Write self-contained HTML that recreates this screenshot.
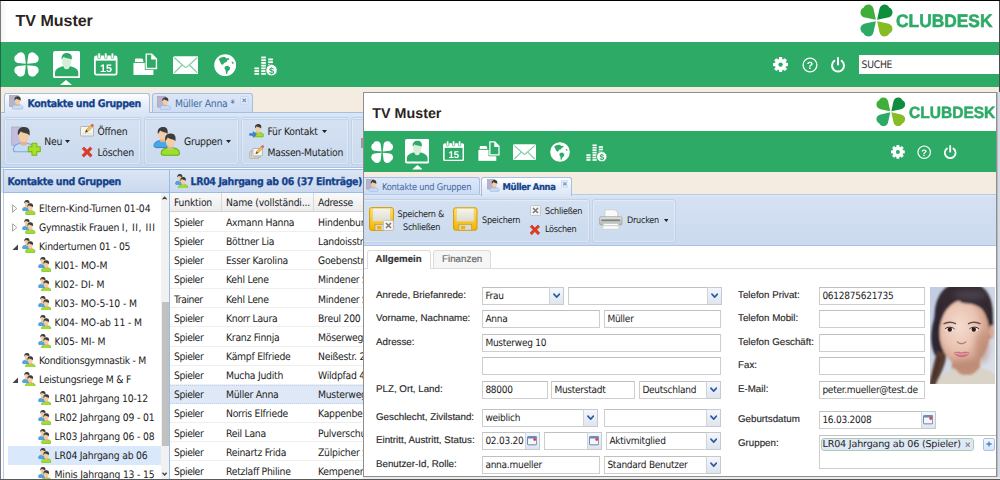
<!DOCTYPE html><html><head><meta charset="utf-8"><title>TV Muster</title><style>
html,body{margin:0;padding:0}
body{text-rendering:geometricPrecision;width:1000px;height:480px;overflow:hidden;position:relative;background:#f4ece1;font-family:"DejaVu Sans Condensed","Liberation Sans",sans-serif;}
div,span,svg{position:absolute;box-sizing:border-box}
span{white-space:nowrap}
.t{font:10.3px/14px "DejaVu Sans Condensed","Liberation Sans",sans-serif;color:#222;letter-spacing:-0.25px}
.tb{font:bold 10.5px/14px "DejaVu Sans Condensed","Liberation Sans",sans-serif;color:#15428b;letter-spacing:-0.38px;-webkit-text-stroke:0.25px #15428b}
.p{font:9px/13px "DejaVu Sans Condensed","Liberation Sans",sans-serif;color:#222;letter-spacing:-0.25px}
.f{font:10px/13px "DejaVu Sans Condensed","Liberation Sans",sans-serif;color:#222;letter-spacing:-0.25px}
.pb{font:bold 9.4px/13px "DejaVu Sans Condensed","Liberation Sans",sans-serif;color:#15428b;letter-spacing:-0.4px;-webkit-text-stroke:0.2px #15428b}
.a{font:9.75px/13px "Liberation Sans",sans-serif;color:#2a2a2a;-webkit-text-stroke:0.15px #2a2a2a}
.h1{font:bold 16px/20px "Liberation Sans",sans-serif;color:#2a2422}
.h2{font:bold 14.3px/18px "Liberation Sans",sans-serif;color:#2a2422}
.grp{border:1px solid #bfd2ea;border-radius:3px;background:linear-gradient(#d4e1f2,#cbdaee);box-shadow:inset 0 0 0 1px rgba(255,255,255,.35)}
.fld{background:#fff;border:1px solid #cecece;border-top-color:#c0c0c0}
.trg{background:linear-gradient(#f4f6fa,#dfe5ee);border:1px solid #c4c9d2;border-left-color:#cfd3da}
</style></head><body>
<div style="left:0px;top:0px;width:1000px;height:42px;background:#fff"></div>
<div style="left:1px;top:1px;width:6px;height:41px;background:linear-gradient(90deg,#f3f3f3,#fff)"></div>
<span class="h1" style="left:15.5px;top:12.0px;">TV Muster</span>
<svg style="position:absolute;left:860px;top:3.5px;" width="33" height="33" viewBox="-13 -13 26 26" ><path d="M-0.5,-0.5 L-9,-2.3 C-11.8,-2.9 -13,-5.2 -12.5,-7.3 C-12.1,-9.1 -11,-9.9 -10.1,-10.1 C-9.9,-11 -9.1,-12.1 -7.3,-12.5 C-5.2,-13 -2.9,-11.8 -2.3,-9 Z" fill="#3fae3a" transform="rotate(0)"/><path d="M-0.5,-0.5 L-9,-2.3 C-11.8,-2.9 -13,-5.2 -12.5,-7.3 C-12.1,-9.1 -11,-9.9 -10.1,-10.1 C-9.9,-11 -9.1,-12.1 -7.3,-12.5 C-5.2,-13 -2.9,-11.8 -2.3,-9 Z" fill="#0f8f3d" transform="rotate(90)"/><path d="M-0.5,-0.5 L-9,-2.3 C-11.8,-2.9 -13,-5.2 -12.5,-7.3 C-12.1,-9.1 -11,-9.9 -10.1,-10.1 C-9.9,-11 -9.1,-12.1 -7.3,-12.5 C-5.2,-13 -2.9,-11.8 -2.3,-9 Z" fill="#86bc25" transform="rotate(180)"/><path d="M-0.5,-0.5 L-9,-2.3 C-11.8,-2.9 -13,-5.2 -12.5,-7.3 C-12.1,-9.1 -11,-9.9 -10.1,-10.1 C-9.9,-11 -9.1,-12.1 -7.3,-12.5 C-5.2,-13 -2.9,-11.8 -2.3,-9 Z" fill="#2eaa67" transform="rotate(270)"/></svg>
<span class="h1" style="left:896px;top:9.6px;color:#2dab66;font-size:18px;line-height:22px;-webkit-text-stroke:0.55px #2dab66;transform:scaleX(0.965);transform-origin:0 0">CLUBDESK</span>
<div style="left:0px;top:42px;width:1000px;height:45px;background:#2dab66"></div>
<svg style="position:absolute;left:14px;top:52px;" width="25" height="25" viewBox="-12.5 -12.5 25 25" ><path d="M-0.7,-0.7 L-8.6,-1.6 C-11.3,-2 -12.5,-4.4 -12.1,-6.6 C-11.8,-8.6 -10.6,-9.4 -9.7,-9.7 C-9.4,-10.6 -8.6,-11.8 -6.6,-12.1 C-4.4,-12.5 -2,-11.3 -1.6,-8.6 Z" fill="#fff" transform="rotate(0)"/><path d="M-0.7,-0.7 L-8.6,-1.6 C-11.3,-2 -12.5,-4.4 -12.1,-6.6 C-11.8,-8.6 -10.6,-9.4 -9.7,-9.7 C-9.4,-10.6 -8.6,-11.8 -6.6,-12.1 C-4.4,-12.5 -2,-11.3 -1.6,-8.6 Z" fill="#fff" transform="rotate(90)"/><path d="M-0.7,-0.7 L-8.6,-1.6 C-11.3,-2 -12.5,-4.4 -12.1,-6.6 C-11.8,-8.6 -10.6,-9.4 -9.7,-9.7 C-9.4,-10.6 -8.6,-11.8 -6.6,-12.1 C-4.4,-12.5 -2,-11.3 -1.6,-8.6 Z" fill="#fff" transform="rotate(180)"/><path d="M-0.7,-0.7 L-8.6,-1.6 C-11.3,-2 -12.5,-4.4 -12.1,-6.6 C-11.8,-8.6 -10.6,-9.4 -9.7,-9.7 C-9.4,-10.6 -8.6,-11.8 -6.6,-12.1 C-4.4,-12.5 -2,-11.3 -1.6,-8.6 Z" fill="#fff" transform="rotate(270)"/></svg>
<svg style="position:absolute;left:52.7px;top:51px;" width="27.3" height="27.3" viewBox="0 0 27 27" ><rect x="0" y="0" width="27" height="27" rx="2.2" fill="#fff"/><path d="M2,25 L2,21.5 C2,17.5 6,16 9.5,15 L17.5,15 C21,16 25,17.5 25,21.5 L25,25 Z" fill="#2dab66"/><ellipse cx="13.5" cy="10.8" rx="4.6" ry="6" fill="#d5edd9"/><path d="M8.6,8.4 C8,3.4 11,2 13.8,2 C17,2 19.4,4 18.5,8.6 C16.5,7 12,7.6 10.5,5.8 C10,7 9.4,7.8 8.6,8.4 Z" fill="#2dab66"/><path d="M10.5,15.2 L16.5,15.2 L15.8,17.2 C14.5,18.2 12.5,18.2 11.2,17.2 Z" fill="#d5edd9"/></svg>
<svg style="position:absolute;left:60px;top:80px;" width="12" height="5" viewBox="0 0 12 5" ><path d="M0,5 L6,0 L12,5 Z" fill="#fff"/></svg>
<svg style="position:absolute;left:94px;top:53px;will-change:transform" width="23.5" height="22.5" viewBox="0 0 24 23" ><rect x="0.9" y="3.4" width="22.2" height="18.8" rx="1.6" fill="none" stroke="#fff" stroke-width="1.8"/><rect x="0.9" y="3.4" width="22.2" height="4.4" fill="#fff"/><rect x="3.9000000000000004" y="0" width="2.6" height="5.6" rx="0.8" fill="#fff" stroke="#2dab66" stroke-width="0.7"/><rect x="10.7" y="0" width="2.6" height="5.6" rx="0.8" fill="#fff" stroke="#2dab66" stroke-width="0.7"/><rect x="17.5" y="0" width="2.6" height="5.6" rx="0.8" fill="#fff" stroke="#2dab66" stroke-width="0.7"/><text x="12.2" y="19.2" font-family="Liberation Sans, sans-serif" font-weight="bold" font-size="11" fill="#fff" text-anchor="middle">15</text></svg>
<svg style="position:absolute;left:133.3px;top:52.8px;" width="24.6" height="22.5" viewBox="0 0 25 23" ><path d="M1.9,6.8 C1.9,6 2.5,5.6 3.2,5.6 L8.6,5.6 C9.4,5.6 10,6.2 10.2,7 L10.6,9.2 L1.9,9.2 Z" fill="#fff"/><path d="M0.4,10.1 L20.8,10.1 L20.8,22.6 L0.4,22.6 Z" fill="#fff"/><path d="M12,-0.4 L19.8,-0.4 L25.4,5.4 L25.4,17.3 L12,17.3 Z" fill="#2dab66"/><path d="M12.8,0.4 L19.4,0.4 L24.6,5.8 L24.6,16.5 L12.8,16.5 Z" fill="#fff"/><path d="M14.2,1.8 L18.5,1.8 L18.5,6.7 L23.2,6.7 L23.2,15.1 L14.2,15.1 Z" fill="#2dab66"/></svg>
<svg style="position:absolute;left:172.7px;top:55.5px;" width="25.6" height="18.2" viewBox="0 0 26 18" ><rect x="0" y="0" width="26" height="18" rx="1.6" fill="#fff"/><path d="M1.8,1.8 L11.8,10.8 C12.6,11.5 13.4,11.5 14.2,10.8 L24.2,1.8" fill="none" stroke="#7fcfa3" stroke-width="1.3" stroke-linecap="round"/><path d="M1.8,16.4 L8.8,9.4 M24.2,16.4 L17.2,9.4" fill="none" stroke="#7fcfa3" stroke-width="1.3" stroke-linecap="round"/></svg>
<svg style="position:absolute;left:213.8px;top:54px;" width="22.4" height="22.4" viewBox="0 0 22 22" ><circle cx="11" cy="11" r="10.8" fill="#fff"/><path d="M4.6,5 C6.4,3.4 8.4,2.6 10.6,3 L12.4,4.4 L14.4,4 L15.2,5.4 L13,6.2 L12.2,8 L10,8.6 L8.8,10.6 L7,10 L6,7.6 Z" fill="#2dab66"/><path d="M11,12 L13.6,11.6 L15.8,13.2 L15.4,15.4 L13.6,17 L12.8,19.6 L11.8,19.4 L11.4,16 L10.2,14 Z" fill="#2dab66"/><path d="M17.4,7.2 L19.2,8.4 L19,10 L17.6,9.2 Z" fill="#2dab66"/></svg>
<svg style="position:absolute;left:253.8px;top:55.2px;will-change:transform" width="23.4" height="20.8" viewBox="0 0 24 21.4" ><rect x="0.4" y="18.4" width="4.8" height="1.9" fill="#fff"/><rect x="0.4" y="15.6" width="4.8" height="1.9" fill="#fff"/><rect x="0.4" y="12.8" width="4.8" height="1.9" fill="#fff"/><rect x="7.4" y="18.4" width="4.8" height="1.9" fill="#fff"/><rect x="7.4" y="15.6" width="4.8" height="1.9" fill="#fff"/><rect x="7.4" y="12.8" width="4.8" height="1.9" fill="#fff"/><rect x="7.4" y="10.0" width="4.8" height="1.9" fill="#fff"/><rect x="7.4" y="7.2" width="4.8" height="1.9" fill="#fff"/><rect x="7.4" y="4.4" width="4.8" height="1.9" fill="#fff"/><rect x="7.4" y="1.6" width="4.8" height="1.9" fill="#fff"/><rect x="14.6" y="12.0" width="4.8" height="1.9" fill="#fff"/><rect x="14.6" y="9.2" width="4.8" height="1.9" fill="#fff"/><rect x="14.6" y="6.4" width="4.8" height="1.9" fill="#fff"/><rect x="14.6" y="3.6" width="4.8" height="1.9" fill="#fff"/><circle cx="18" cy="15.6" r="5.9" fill="#fff" stroke="#2dab66" stroke-width="1"/><text x="18" y="19.2" font-family="Liberation Sans, sans-serif" font-weight="bold" font-size="9.6" fill="#2dab66" text-anchor="middle">$</text></svg>
<svg style="position:absolute;left:773px;top:57px;" width="15.2" height="15.2" viewBox="-7.6 -7.6 15.2 15.2" ><path d="M-1.45,-7.6 L1.45,-7.6 L2.0,-4.4 L-2.0,-4.4 Z" fill="#fff" transform="rotate(0)"/><path d="M-1.45,-7.6 L1.45,-7.6 L2.0,-4.4 L-2.0,-4.4 Z" fill="#fff" transform="rotate(45)"/><path d="M-1.45,-7.6 L1.45,-7.6 L2.0,-4.4 L-2.0,-4.4 Z" fill="#fff" transform="rotate(90)"/><path d="M-1.45,-7.6 L1.45,-7.6 L2.0,-4.4 L-2.0,-4.4 Z" fill="#fff" transform="rotate(135)"/><path d="M-1.45,-7.6 L1.45,-7.6 L2.0,-4.4 L-2.0,-4.4 Z" fill="#fff" transform="rotate(180)"/><path d="M-1.45,-7.6 L1.45,-7.6 L2.0,-4.4 L-2.0,-4.4 Z" fill="#fff" transform="rotate(225)"/><path d="M-1.45,-7.6 L1.45,-7.6 L2.0,-4.4 L-2.0,-4.4 Z" fill="#fff" transform="rotate(270)"/><path d="M-1.45,-7.6 L1.45,-7.6 L2.0,-4.4 L-2.0,-4.4 Z" fill="#fff" transform="rotate(315)"/><circle r="5.5" fill="#fff"/><circle r="2.2" fill="#2dab66"/></svg>
<svg style="position:absolute;left:801.6px;top:56.6px;will-change:transform" width="16" height="16" viewBox="0 0 16 16" ><circle cx="8" cy="8" r="6.9" fill="none" stroke="#fff" stroke-width="1.3"/><text x="8" y="11.8" font-family="Liberation Sans, sans-serif" font-weight="bold" font-size="10.5" fill="#fff" text-anchor="middle">?</text></svg>
<svg style="position:absolute;left:830.2px;top:56.6px;" width="16" height="16" viewBox="0 0 16 16" ><path d="M4.4,3.8 A6,6 0 1 0 11.6,3.8" fill="none" stroke="#fff" stroke-width="2" stroke-linecap="round"/><path d="M8,1.1 L8,7.4" stroke="#fff" stroke-width="2" stroke-linecap="round"/></svg>
<div style="left:858.5px;top:55px;width:141px;height:19px;background:#fff"></div>
<span class="t" style="left:861.5px;top:58.3px;color:#333">SUCHE</span>
<div style="left:152px;top:93px;width:101px;height:19.5px;border:1px solid #a3bfe8;border-bottom:none;border-radius:3px 3px 0 0;background:linear-gradient(#dce7f7,#cddcf3)"></div>
<div style="left:1px;top:112.4px;width:362px;height:4.6px;background:#dbe6f5;border-top:1px solid #a3bfe8"></div>
<div style="left:4px;top:93px;width:145.5px;height:20px;border:1px solid #a3bfe8;border-bottom:none;border-radius:3px 3px 0 0;background:linear-gradient(#ffffff,#e6eefa 55%,#dbe6f5)"></div>
<div style="left:5px;top:112px;width:143.5px;height:2px;background:#dbe6f5"></div>
<svg style="position:absolute;left:8.6px;top:95px;" width="15" height="15" viewBox="0 0 15 15" ><rect x="0.5" y="0.5" width="8.5" height="11" fill="#b7b3c9" stroke="#9e9ab6" stroke-width="0.6"/><g transform="translate(8.6,1.2) scale(0.86)"><path d="M-6.3,13.6 C-6.3,10.8 -3.6,9.8 0,9.8 C3.6,9.8 6.3,10.8 6.3,13.6 C6.3,14.5 5.6,15 4.8,15 L-4.8,15 C-5.6,15 -6.3,14.5 -6.3,13.6 Z" fill="#c6dcf6" stroke="#8fb4e6" stroke-width="0.7"/><path d="M-1.6,8 L1.6,8 L2.2,10.4 C1,11.4 -1,11.4 -2.2,10.4 Z" fill="#e0b48c"/><ellipse cx="0" cy="5.5" rx="3.1" ry="3.8" fill="#f2cda8"/><path d="M-3.5,5 C-4.2,0.8 -1.6,0 0.4,0 C2.9,0 4.2,1.9 3.5,5.2 C2.6,3.6 -0.6,3.9 -1.8,2.6 C-2.2,3.6 -2.8,4.4 -3.5,5 Z" fill="#3c3c3c"/></g></svg>
<span class="tb" style="left:27.5px;top:96.7px;">Kontakte und Gruppen</span>
<svg style="position:absolute;left:157px;top:95.6px;" width="14.5" height="14.5" viewBox="0 0 15 15" ><rect x="0.5" y="0.5" width="8.5" height="11" fill="#b7b3c9" stroke="#9e9ab6" stroke-width="0.6"/><g transform="translate(8.6,1.2) scale(0.86)"><path d="M-6.3,13.6 C-6.3,10.8 -3.6,9.8 0,9.8 C3.6,9.8 6.3,10.8 6.3,13.6 C6.3,14.5 5.6,15 4.8,15 L-4.8,15 C-5.6,15 -6.3,14.5 -6.3,13.6 Z" fill="#c6dcf6" stroke="#8fb4e6" stroke-width="0.7"/><path d="M-1.6,8 L1.6,8 L2.2,10.4 C1,11.4 -1,11.4 -2.2,10.4 Z" fill="#e0b48c"/><ellipse cx="0" cy="5.5" rx="3.1" ry="3.8" fill="#f2cda8"/><path d="M-3.5,5 C-4.2,0.8 -1.6,0 0.4,0 C2.9,0 4.2,1.9 3.5,5.2 C2.6,3.6 -0.6,3.9 -1.8,2.6 C-2.2,3.6 -2.8,4.4 -3.5,5 Z" fill="#3c3c3c"/></g></svg>
<span class="t" style="left:175px;top:96.6px;color:#416aa3">Müller Anna *</span>
<svg style="position:absolute;left:240.2px;top:96.2px;" width="8.6" height="8.6" viewBox="0 0 7 7" ><rect x="0.4" y="0.4" width="6.2" height="6.2" rx="1" fill="#e3ecf9" stroke="#b7cdee" stroke-width="0.5"/><path d="M2.1,2.1 L4.9,4.9 M4.9,2.1 L2.1,4.9" stroke="#6f92c6" stroke-width="1"/></svg>
<div style="left:1px;top:115.5px;width:362px;height:52.5px;background:linear-gradient(#d5e1f3,#cbdaee);border-bottom:1px solid #a9c3e6"></div>
<div class="grp" style="left:3.5px;top:116.5px;width:137px;height:48.5px;"></div>
<div class="grp" style="left:143.5px;top:116.5px;width:95.2px;height:48.5px;"></div>
<div class="grp" style="left:241.4px;top:116.5px;width:108px;height:48.5px;"></div>
<div class="grp" style="left:351.4px;top:116.5px;width:20px;height:48.5px;"></div>
<div style="left:5.5px;top:119px;width:133px;height:1px;background:#c0d3ec"></div>
<div style="left:145.5px;top:119px;width:91.2px;height:1px;background:#c0d3ec"></div>
<div style="left:243.4px;top:119px;width:104px;height:1px;background:#c0d3ec"></div>
<div style="left:353.4px;top:119px;width:16px;height:1px;background:#c0d3ec"></div>
<div style="left:360.8px;top:138px;width:2.2px;height:10px;background:#9a9a98"></div>
<svg style="position:absolute;left:11px;top:126px;" width="30.5" height="30.5" viewBox="0 0 30 30" ><rect x="0.8" y="1" width="10.5" height="18" fill="#c4bedd" stroke="#a59fc8" stroke-width="0.7"/><g transform="translate(12.5,1) scale(1.62)"><path d="M-6.3,13.6 C-6.3,10.8 -3.6,9.8 0,9.8 C3.6,9.8 6.3,10.8 6.3,13.6 C6.3,14.5 5.6,15 4.8,15 L-4.8,15 C-5.6,15 -6.3,14.5 -6.3,13.6 Z" fill="#c6dcf6" stroke="#7fa8e0" stroke-width="0.7"/><path d="M-1.6,8 L1.6,8 L2.2,10.4 C1,11.4 -1,11.4 -2.2,10.4 Z" fill="#e0b48c"/><ellipse cx="0" cy="5.5" rx="3.1" ry="3.8" fill="#f2cda8"/><path d="M-3.5,5 C-4.2,0.8 -1.6,0 0.4,0 C2.9,0 4.2,1.9 3.5,5.2 C2.6,3.6 -0.6,3.9 -1.8,2.6 C-2.2,3.6 -2.8,4.4 -3.5,5 Z" fill="#3c3c3c"/></g><path d="M20.6,17 L25.4,17 L25.4,20.4 L28.8,20.4 L28.8,25.2 L25.4,25.2 L25.4,28.8 L20.6,28.8 L20.6,25.2 L17,25.2 L17,20.4 L20.6,20.4 Z" fill="#a6e02a" stroke="#7cb518" stroke-width="1" stroke-linejoin="round"/></svg>
<span class="t" style="left:44.3px;top:135.4px;">Neu</span>
<svg style="position:absolute;left:65px;top:140px;" width="5" height="3.2" viewBox="0 0 5 3" ><path d='M0,0 L5,0 L2.5,3 Z' fill='#222'/></svg>
<svg style="position:absolute;left:79.6px;top:124px;" width="14" height="12.5" viewBox="0 0 14 12.5" ><rect x="0.5" y="2.5" width="13" height="9.5" rx="0.8" fill="#f4f4f0" stroke="#a8a8a0" stroke-width="0.8"/><path d="M2.5,9.8 L11.5,9.8" stroke="#c8c8c0" stroke-width="0.8" stroke-dasharray="1.5 1"/><path d="M5.2,8.6 L6.2,5.8 L11.2,0.9 L13,2.6 L8,7.6 Z" fill="#f2c24a" stroke="#b88a20" stroke-width="0.5"/><path d="M5.2,8.6 L6.2,5.8 L8,7.6 Z" fill="#444"/><circle cx="12.3" cy="1.4" r="1.3" fill="#e8506a"/></svg>
<span class="t" style="left:97.5px;top:125.0px;">Öffnen</span>
<svg style="position:absolute;left:80.7px;top:145.7px;" width="12.2" height="12.2" viewBox="0 0 11.5 11.5" ><path d="M1.2,2.6 L2.8,1 L5.75,3.9 L8.7,1 L10.3,2.6 L7.5,5.6 L10.5,8.7 L8.8,10.4 L5.75,7.4 L2.7,10.4 L1,8.7 L4,5.6 Z" fill="#e23b24" stroke="#c22a16" stroke-width="0.6" stroke-linejoin="round"/></svg>
<span class="t" style="left:97.5px;top:145.6px;">Löschen</span>
<svg style="position:absolute;left:151.5px;top:127px;" width="29.5" height="28.5" viewBox="0 0 29 28" ><g transform="translate(10.5,0) scale(1.35)"><path d="M-6.3,13.6 C-6.3,10.8 -3.6,9.8 0,9.8 C3.6,9.8 6.3,10.8 6.3,13.6 C6.3,14.5 5.6,15 4.8,15 L-4.8,15 C-5.6,15 -6.3,14.5 -6.3,13.6 Z" fill="#4aa6e8" stroke="#2d7fc0" stroke-width="0.7"/><path d="M-1.6,8 L1.6,8 L2.2,10.4 C1,11.4 -1,11.4 -2.2,10.4 Z" fill="#e0b48c"/><ellipse cx="0" cy="5.5" rx="3.1" ry="3.8" fill="#f2cda8"/><path d="M-3.5,5 C-4.2,0.8 -1.6,0 0.4,0 C2.9,0 4.2,1.9 3.5,5.2 C2.6,3.6 -0.6,3.9 -1.8,2.6 C-2.2,3.6 -2.8,4.4 -3.5,5 Z" fill="#3c3c3c"/></g><g transform="translate(18,6.5) scale(1.42)"><path d="M-6.3,13.6 C-6.3,10.8 -3.6,9.8 0,9.8 C3.6,9.8 6.3,10.8 6.3,13.6 C6.3,14.5 5.6,15 4.8,15 L-4.8,15 C-5.6,15 -6.3,14.5 -6.3,13.6 Z" fill="#9be02a" stroke="#6aa81a" stroke-width="0.7"/><path d="M-1.6,8 L1.6,8 L2.2,10.4 C1,11.4 -1,11.4 -2.2,10.4 Z" fill="#e0b48c"/><ellipse cx="0" cy="5.5" rx="3.1" ry="3.8" fill="#f2cda8"/><path d="M-3.5,5 C-4.2,0.8 -1.6,0 0.4,0 C2.9,0 4.2,1.9 3.5,5.2 C2.6,3.6 -0.6,3.9 -1.8,2.6 C-2.2,3.6 -2.8,4.4 -3.5,5 Z" fill="#3c3c3c"/></g></svg>
<span class="t" style="left:184px;top:135.4px;">Gruppen</span>
<svg style="position:absolute;left:225.6px;top:140px;" width="5" height="3.2" viewBox="0 0 5 3" ><path d='M0,0 L5,0 L2.5,3 Z' fill='#222'/></svg>
<svg style="position:absolute;left:249px;top:124px;" width="15.4" height="14" viewBox="0 0 15 14" ><g transform="translate(9,0) scale(0.86)"><path d="M-6.3,13.6 C-6.3,10.8 -3.6,9.8 0,9.8 C3.6,9.8 6.3,10.8 6.3,13.6 C6.3,14.5 5.6,15 4.8,15 L-4.8,15 C-5.6,15 -6.3,14.5 -6.3,13.6 Z" fill="#9be02a" stroke="#6aa81a" stroke-width="0.7"/><path d="M-1.6,8 L1.6,8 L2.2,10.4 C1,11.4 -1,11.4 -2.2,10.4 Z" fill="#e0b48c"/><ellipse cx="0" cy="5.5" rx="3.1" ry="3.8" fill="#f2cda8"/><path d="M-3.5,5 C-4.2,0.8 -1.6,0 0.4,0 C2.9,0 4.2,1.9 3.5,5.2 C2.6,3.6 -0.6,3.9 -1.8,2.6 C-2.2,3.6 -2.8,4.4 -3.5,5 Z" fill="#3c3c3c"/></g><path d="M0.4,9.4 L4,9.4 L4,7.4 L7.4,10.4 L4,13.4 L4,11.4 L0.4,11.4 Z" fill="#3b82e0" stroke="#2563c0" stroke-width="0.4"/></svg>
<span class="t" style="left:267.6px;top:125.4px;">Für Kontakt</span>
<svg style="position:absolute;left:321.6px;top:130px;" width="5" height="3.2" viewBox="0 0 5 3" ><path d='M0,0 L5,0 L2.5,3 Z' fill='#222'/></svg>
<svg style="position:absolute;left:249px;top:144.6px;" width="15.4" height="14.6" viewBox="0 0 15 14.5" ><rect x="0.6" y="6.6" width="9" height="7" rx="0.8" fill="#e4e4dc" stroke="#a0a098" stroke-width="0.7"/><rect x="2.2" y="5" width="9" height="7" rx="0.8" fill="#ecece6" stroke="#a0a098" stroke-width="0.7"/><rect x="3.8" y="3.4" width="9.4" height="7.4" rx="0.8" fill="#f6f6f2" stroke="#a0a098" stroke-width="0.7"/><path d="M6.6,8.8 L7.4,6.4 L12,1.6 L13.6,3.2 L9,7.9 Z" fill="#f2c24a" stroke="#b88a20" stroke-width="0.5"/><path d="M6.6,8.8 L7.4,6.4 L9,7.9 Z" fill="#444"/><circle cx="13.4" cy="1.6" r="1.3" fill="#e8506a"/></svg>
<span class="t" style="left:267.6px;top:146.2px;">Massen-Mutation</span>
<div style="left:1px;top:168px;width:362px;height:312px;background:#fff"></div>
<div style="left:1px;top:168px;width:2.5px;height:25px;background:#dfe8f6"></div>
<div style="left:3px;top:168.5px;width:166.5px;height:24.5px;background:linear-gradient(#dbe6f5,#cad9ee);border-bottom:1px solid #99bbe8;border-left:1px solid #99bbe8;border-top:1px solid #99bbe8"></div>
<span class="tb" style="left:7.5px;top:175.3px;">Kontakte und Gruppen</span>
<div style="left:2.5px;top:193px;width:1px;height:287px;background:#b5cdef"></div>
<div style="left:169px;top:168.5px;width:1px;height:312px;background:#99bbe8"></div>
<div style="left:170px;top:168.5px;width:193px;height:24.5px;background:linear-gradient(#dbe6f5,#cad9ee);border-bottom:1px solid #99bbe8;border-top:1px solid #99bbe8"></div>
<svg style="position:absolute;left:174.6px;top:173.8px;" width="13.6" height="14.571428571428571" viewBox="0 0 14 15" ><g transform="translate(5,0) scale(0.72)"><path d="M-6.3,13.6 C-6.3,10.8 -3.6,9.8 0,9.8 C3.6,9.8 6.3,10.8 6.3,13.6 C6.3,14.5 5.6,15 4.8,15 L-4.8,15 C-5.6,15 -6.3,14.5 -6.3,13.6 Z" fill="#4aa6e8" stroke="#2d7fc0" stroke-width="0.7"/><path d="M-1.6,8 L1.6,8 L2.2,10.4 C1,11.4 -1,11.4 -2.2,10.4 Z" fill="#e0b48c"/><ellipse cx="0" cy="5.5" rx="3.1" ry="3.8" fill="#f2cda8"/><path d="M-3.5,5 C-4.2,0.8 -1.6,0 0.4,0 C2.9,0 4.2,1.9 3.5,5.2 C2.6,3.6 -0.6,3.9 -1.8,2.6 C-2.2,3.6 -2.8,4.4 -3.5,5 Z" fill="#3c3c3c"/></g><g transform="translate(8.4,3.2) scale(0.78)"><path d="M-6.3,13.6 C-6.3,10.8 -3.6,9.8 0,9.8 C3.6,9.8 6.3,10.8 6.3,13.6 C6.3,14.5 5.6,15 4.8,15 L-4.8,15 C-5.6,15 -6.3,14.5 -6.3,13.6 Z" fill="#9be02a" stroke="#6aa81a" stroke-width="0.7"/><path d="M-1.6,8 L1.6,8 L2.2,10.4 C1,11.4 -1,11.4 -2.2,10.4 Z" fill="#e0b48c"/><ellipse cx="0" cy="5.5" rx="3.1" ry="3.8" fill="#f2cda8"/><path d="M-3.5,5 C-4.2,0.8 -1.6,0 0.4,0 C2.9,0 4.2,1.9 3.5,5.2 C2.6,3.6 -0.6,3.9 -1.8,2.6 C-2.2,3.6 -2.8,4.4 -3.5,5 Z" fill="#3c3c3c"/></g></svg>
<span class="tb" style="left:190.6px;top:175.3px;">LR04 Jahrgang ab 06 (37 Einträge)</span>
<svg style="position:absolute;left:12px;top:203.5px;" width="5.5" height="9" viewBox="0 0 5.5 9" ><path d='M0.6,0.8 L4.8,4.5 L0.6,8.2 Z' fill='#fff' stroke='#9a9a9a' stroke-width='0.9'/></svg>
<svg style="position:absolute;left:22px;top:200.4px;" width="13.8" height="14.785714285714286" viewBox="0 0 14 15" ><g transform="translate(5,0) scale(0.72)"><path d="M-6.3,13.6 C-6.3,10.8 -3.6,9.8 0,9.8 C3.6,9.8 6.3,10.8 6.3,13.6 C6.3,14.5 5.6,15 4.8,15 L-4.8,15 C-5.6,15 -6.3,14.5 -6.3,13.6 Z" fill="#4aa6e8" stroke="#2d7fc0" stroke-width="0.7"/><path d="M-1.6,8 L1.6,8 L2.2,10.4 C1,11.4 -1,11.4 -2.2,10.4 Z" fill="#e0b48c"/><ellipse cx="0" cy="5.5" rx="3.1" ry="3.8" fill="#f2cda8"/><path d="M-3.5,5 C-4.2,0.8 -1.6,0 0.4,0 C2.9,0 4.2,1.9 3.5,5.2 C2.6,3.6 -0.6,3.9 -1.8,2.6 C-2.2,3.6 -2.8,4.4 -3.5,5 Z" fill="#3c3c3c"/></g><g transform="translate(8.4,3.2) scale(0.78)"><path d="M-6.3,13.6 C-6.3,10.8 -3.6,9.8 0,9.8 C3.6,9.8 6.3,10.8 6.3,13.6 C6.3,14.5 5.6,15 4.8,15 L-4.8,15 C-5.6,15 -6.3,14.5 -6.3,13.6 Z" fill="#9be02a" stroke="#6aa81a" stroke-width="0.7"/><path d="M-1.6,8 L1.6,8 L2.2,10.4 C1,11.4 -1,11.4 -2.2,10.4 Z" fill="#e0b48c"/><ellipse cx="0" cy="5.5" rx="3.1" ry="3.8" fill="#f2cda8"/><path d="M-3.5,5 C-4.2,0.8 -1.6,0 0.4,0 C2.9,0 4.2,1.9 3.5,5.2 C2.6,3.6 -0.6,3.9 -1.8,2.6 C-2.2,3.6 -2.8,4.4 -3.5,5 Z" fill="#3c3c3c"/></g></svg>
<span class="t" style="left:39px;top:201.6px;letter-spacing:-0.12px;">Eltern-Kind-Turnen 01-04</span>
<svg style="position:absolute;left:12px;top:222.53px;" width="5.5" height="9" viewBox="0 0 5.5 9" ><path d='M0.6,0.8 L4.8,4.5 L0.6,8.2 Z' fill='#fff' stroke='#9a9a9a' stroke-width='0.9'/></svg>
<svg style="position:absolute;left:22px;top:219.43px;" width="13.8" height="14.785714285714286" viewBox="0 0 14 15" ><g transform="translate(5,0) scale(0.72)"><path d="M-6.3,13.6 C-6.3,10.8 -3.6,9.8 0,9.8 C3.6,9.8 6.3,10.8 6.3,13.6 C6.3,14.5 5.6,15 4.8,15 L-4.8,15 C-5.6,15 -6.3,14.5 -6.3,13.6 Z" fill="#4aa6e8" stroke="#2d7fc0" stroke-width="0.7"/><path d="M-1.6,8 L1.6,8 L2.2,10.4 C1,11.4 -1,11.4 -2.2,10.4 Z" fill="#e0b48c"/><ellipse cx="0" cy="5.5" rx="3.1" ry="3.8" fill="#f2cda8"/><path d="M-3.5,5 C-4.2,0.8 -1.6,0 0.4,0 C2.9,0 4.2,1.9 3.5,5.2 C2.6,3.6 -0.6,3.9 -1.8,2.6 C-2.2,3.6 -2.8,4.4 -3.5,5 Z" fill="#3c3c3c"/></g><g transform="translate(8.4,3.2) scale(0.78)"><path d="M-6.3,13.6 C-6.3,10.8 -3.6,9.8 0,9.8 C3.6,9.8 6.3,10.8 6.3,13.6 C6.3,14.5 5.6,15 4.8,15 L-4.8,15 C-5.6,15 -6.3,14.5 -6.3,13.6 Z" fill="#9be02a" stroke="#6aa81a" stroke-width="0.7"/><path d="M-1.6,8 L1.6,8 L2.2,10.4 C1,11.4 -1,11.4 -2.2,10.4 Z" fill="#e0b48c"/><ellipse cx="0" cy="5.5" rx="3.1" ry="3.8" fill="#f2cda8"/><path d="M-3.5,5 C-4.2,0.8 -1.6,0 0.4,0 C2.9,0 4.2,1.9 3.5,5.2 C2.6,3.6 -0.6,3.9 -1.8,2.6 C-2.2,3.6 -2.8,4.4 -3.5,5 Z" fill="#3c3c3c"/></g></svg>
<span class="t" style="left:39px;top:220.63px;">Gymnastik Frauen <span style="position:static;letter-spacing:0.55px">I, II, III</span></span>
<svg style="position:absolute;left:11.5px;top:243.56px;" width="6.5" height="6.5" viewBox="0 0 6.5 6.5" ><path d='M6,0.5 L6,6 L0.5,6 Z' fill='#444'/></svg>
<svg style="position:absolute;left:22px;top:238.46px;" width="13.8" height="14.785714285714286" viewBox="0 0 14 15" ><g transform="translate(5,0) scale(0.72)"><path d="M-6.3,13.6 C-6.3,10.8 -3.6,9.8 0,9.8 C3.6,9.8 6.3,10.8 6.3,13.6 C6.3,14.5 5.6,15 4.8,15 L-4.8,15 C-5.6,15 -6.3,14.5 -6.3,13.6 Z" fill="#4aa6e8" stroke="#2d7fc0" stroke-width="0.7"/><path d="M-1.6,8 L1.6,8 L2.2,10.4 C1,11.4 -1,11.4 -2.2,10.4 Z" fill="#e0b48c"/><ellipse cx="0" cy="5.5" rx="3.1" ry="3.8" fill="#f2cda8"/><path d="M-3.5,5 C-4.2,0.8 -1.6,0 0.4,0 C2.9,0 4.2,1.9 3.5,5.2 C2.6,3.6 -0.6,3.9 -1.8,2.6 C-2.2,3.6 -2.8,4.4 -3.5,5 Z" fill="#3c3c3c"/></g><g transform="translate(8.4,3.2) scale(0.78)"><path d="M-6.3,13.6 C-6.3,10.8 -3.6,9.8 0,9.8 C3.6,9.8 6.3,10.8 6.3,13.6 C6.3,14.5 5.6,15 4.8,15 L-4.8,15 C-5.6,15 -6.3,14.5 -6.3,13.6 Z" fill="#9be02a" stroke="#6aa81a" stroke-width="0.7"/><path d="M-1.6,8 L1.6,8 L2.2,10.4 C1,11.4 -1,11.4 -2.2,10.4 Z" fill="#e0b48c"/><ellipse cx="0" cy="5.5" rx="3.1" ry="3.8" fill="#f2cda8"/><path d="M-3.5,5 C-4.2,0.8 -1.6,0 0.4,0 C2.9,0 4.2,1.9 3.5,5.2 C2.6,3.6 -0.6,3.9 -1.8,2.6 C-2.2,3.6 -2.8,4.4 -3.5,5 Z" fill="#3c3c3c"/></g></svg>
<span class="t" style="left:39px;top:239.66px;letter-spacing:-0.25px;">Kinderturnen 01 - 05</span>
<svg style="position:absolute;left:37.5px;top:257.49px;" width="13.8" height="14.785714285714286" viewBox="0 0 14 15" ><g transform="translate(5,0) scale(0.72)"><path d="M-6.3,13.6 C-6.3,10.8 -3.6,9.8 0,9.8 C3.6,9.8 6.3,10.8 6.3,13.6 C6.3,14.5 5.6,15 4.8,15 L-4.8,15 C-5.6,15 -6.3,14.5 -6.3,13.6 Z" fill="#4aa6e8" stroke="#2d7fc0" stroke-width="0.7"/><path d="M-1.6,8 L1.6,8 L2.2,10.4 C1,11.4 -1,11.4 -2.2,10.4 Z" fill="#e0b48c"/><ellipse cx="0" cy="5.5" rx="3.1" ry="3.8" fill="#f2cda8"/><path d="M-3.5,5 C-4.2,0.8 -1.6,0 0.4,0 C2.9,0 4.2,1.9 3.5,5.2 C2.6,3.6 -0.6,3.9 -1.8,2.6 C-2.2,3.6 -2.8,4.4 -3.5,5 Z" fill="#3c3c3c"/></g><g transform="translate(8.4,3.2) scale(0.78)"><path d="M-6.3,13.6 C-6.3,10.8 -3.6,9.8 0,9.8 C3.6,9.8 6.3,10.8 6.3,13.6 C6.3,14.5 5.6,15 4.8,15 L-4.8,15 C-5.6,15 -6.3,14.5 -6.3,13.6 Z" fill="#9be02a" stroke="#6aa81a" stroke-width="0.7"/><path d="M-1.6,8 L1.6,8 L2.2,10.4 C1,11.4 -1,11.4 -2.2,10.4 Z" fill="#e0b48c"/><ellipse cx="0" cy="5.5" rx="3.1" ry="3.8" fill="#f2cda8"/><path d="M-3.5,5 C-4.2,0.8 -1.6,0 0.4,0 C2.9,0 4.2,1.9 3.5,5.2 C2.6,3.6 -0.6,3.9 -1.8,2.6 C-2.2,3.6 -2.8,4.4 -3.5,5 Z" fill="#3c3c3c"/></g></svg>
<span class="t" style="left:54.5px;top:258.69px;letter-spacing:-0.08px;">KI01- MO-M</span>
<svg style="position:absolute;left:37.5px;top:276.52px;" width="13.8" height="14.785714285714286" viewBox="0 0 14 15" ><g transform="translate(5,0) scale(0.72)"><path d="M-6.3,13.6 C-6.3,10.8 -3.6,9.8 0,9.8 C3.6,9.8 6.3,10.8 6.3,13.6 C6.3,14.5 5.6,15 4.8,15 L-4.8,15 C-5.6,15 -6.3,14.5 -6.3,13.6 Z" fill="#4aa6e8" stroke="#2d7fc0" stroke-width="0.7"/><path d="M-1.6,8 L1.6,8 L2.2,10.4 C1,11.4 -1,11.4 -2.2,10.4 Z" fill="#e0b48c"/><ellipse cx="0" cy="5.5" rx="3.1" ry="3.8" fill="#f2cda8"/><path d="M-3.5,5 C-4.2,0.8 -1.6,0 0.4,0 C2.9,0 4.2,1.9 3.5,5.2 C2.6,3.6 -0.6,3.9 -1.8,2.6 C-2.2,3.6 -2.8,4.4 -3.5,5 Z" fill="#3c3c3c"/></g><g transform="translate(8.4,3.2) scale(0.78)"><path d="M-6.3,13.6 C-6.3,10.8 -3.6,9.8 0,9.8 C3.6,9.8 6.3,10.8 6.3,13.6 C6.3,14.5 5.6,15 4.8,15 L-4.8,15 C-5.6,15 -6.3,14.5 -6.3,13.6 Z" fill="#9be02a" stroke="#6aa81a" stroke-width="0.7"/><path d="M-1.6,8 L1.6,8 L2.2,10.4 C1,11.4 -1,11.4 -2.2,10.4 Z" fill="#e0b48c"/><ellipse cx="0" cy="5.5" rx="3.1" ry="3.8" fill="#f2cda8"/><path d="M-3.5,5 C-4.2,0.8 -1.6,0 0.4,0 C2.9,0 4.2,1.9 3.5,5.2 C2.6,3.6 -0.6,3.9 -1.8,2.6 C-2.2,3.6 -2.8,4.4 -3.5,5 Z" fill="#3c3c3c"/></g></svg>
<span class="t" style="left:54.5px;top:277.72px;letter-spacing:-0.09px;">KI02- DI- M</span>
<svg style="position:absolute;left:37.5px;top:295.54999999999995px;" width="13.8" height="14.785714285714286" viewBox="0 0 14 15" ><g transform="translate(5,0) scale(0.72)"><path d="M-6.3,13.6 C-6.3,10.8 -3.6,9.8 0,9.8 C3.6,9.8 6.3,10.8 6.3,13.6 C6.3,14.5 5.6,15 4.8,15 L-4.8,15 C-5.6,15 -6.3,14.5 -6.3,13.6 Z" fill="#4aa6e8" stroke="#2d7fc0" stroke-width="0.7"/><path d="M-1.6,8 L1.6,8 L2.2,10.4 C1,11.4 -1,11.4 -2.2,10.4 Z" fill="#e0b48c"/><ellipse cx="0" cy="5.5" rx="3.1" ry="3.8" fill="#f2cda8"/><path d="M-3.5,5 C-4.2,0.8 -1.6,0 0.4,0 C2.9,0 4.2,1.9 3.5,5.2 C2.6,3.6 -0.6,3.9 -1.8,2.6 C-2.2,3.6 -2.8,4.4 -3.5,5 Z" fill="#3c3c3c"/></g><g transform="translate(8.4,3.2) scale(0.78)"><path d="M-6.3,13.6 C-6.3,10.8 -3.6,9.8 0,9.8 C3.6,9.8 6.3,10.8 6.3,13.6 C6.3,14.5 5.6,15 4.8,15 L-4.8,15 C-5.6,15 -6.3,14.5 -6.3,13.6 Z" fill="#9be02a" stroke="#6aa81a" stroke-width="0.7"/><path d="M-1.6,8 L1.6,8 L2.2,10.4 C1,11.4 -1,11.4 -2.2,10.4 Z" fill="#e0b48c"/><ellipse cx="0" cy="5.5" rx="3.1" ry="3.8" fill="#f2cda8"/><path d="M-3.5,5 C-4.2,0.8 -1.6,0 0.4,0 C2.9,0 4.2,1.9 3.5,5.2 C2.6,3.6 -0.6,3.9 -1.8,2.6 C-2.2,3.6 -2.8,4.4 -3.5,5 Z" fill="#3c3c3c"/></g></svg>
<span class="t" style="left:54.5px;top:296.75px;letter-spacing:-0.09px;">KI03- MO-5-10 - M</span>
<svg style="position:absolute;left:37.5px;top:314.58px;" width="13.8" height="14.785714285714286" viewBox="0 0 14 15" ><g transform="translate(5,0) scale(0.72)"><path d="M-6.3,13.6 C-6.3,10.8 -3.6,9.8 0,9.8 C3.6,9.8 6.3,10.8 6.3,13.6 C6.3,14.5 5.6,15 4.8,15 L-4.8,15 C-5.6,15 -6.3,14.5 -6.3,13.6 Z" fill="#4aa6e8" stroke="#2d7fc0" stroke-width="0.7"/><path d="M-1.6,8 L1.6,8 L2.2,10.4 C1,11.4 -1,11.4 -2.2,10.4 Z" fill="#e0b48c"/><ellipse cx="0" cy="5.5" rx="3.1" ry="3.8" fill="#f2cda8"/><path d="M-3.5,5 C-4.2,0.8 -1.6,0 0.4,0 C2.9,0 4.2,1.9 3.5,5.2 C2.6,3.6 -0.6,3.9 -1.8,2.6 C-2.2,3.6 -2.8,4.4 -3.5,5 Z" fill="#3c3c3c"/></g><g transform="translate(8.4,3.2) scale(0.78)"><path d="M-6.3,13.6 C-6.3,10.8 -3.6,9.8 0,9.8 C3.6,9.8 6.3,10.8 6.3,13.6 C6.3,14.5 5.6,15 4.8,15 L-4.8,15 C-5.6,15 -6.3,14.5 -6.3,13.6 Z" fill="#9be02a" stroke="#6aa81a" stroke-width="0.7"/><path d="M-1.6,8 L1.6,8 L2.2,10.4 C1,11.4 -1,11.4 -2.2,10.4 Z" fill="#e0b48c"/><ellipse cx="0" cy="5.5" rx="3.1" ry="3.8" fill="#f2cda8"/><path d="M-3.5,5 C-4.2,0.8 -1.6,0 0.4,0 C2.9,0 4.2,1.9 3.5,5.2 C2.6,3.6 -0.6,3.9 -1.8,2.6 C-2.2,3.6 -2.8,4.4 -3.5,5 Z" fill="#3c3c3c"/></g></svg>
<span class="t" style="left:54.5px;top:315.78px;letter-spacing:-0.1px;">KI04- MO-ab 11 - M</span>
<svg style="position:absolute;left:37.5px;top:333.61px;" width="13.8" height="14.785714285714286" viewBox="0 0 14 15" ><g transform="translate(5,0) scale(0.72)"><path d="M-6.3,13.6 C-6.3,10.8 -3.6,9.8 0,9.8 C3.6,9.8 6.3,10.8 6.3,13.6 C6.3,14.5 5.6,15 4.8,15 L-4.8,15 C-5.6,15 -6.3,14.5 -6.3,13.6 Z" fill="#4aa6e8" stroke="#2d7fc0" stroke-width="0.7"/><path d="M-1.6,8 L1.6,8 L2.2,10.4 C1,11.4 -1,11.4 -2.2,10.4 Z" fill="#e0b48c"/><ellipse cx="0" cy="5.5" rx="3.1" ry="3.8" fill="#f2cda8"/><path d="M-3.5,5 C-4.2,0.8 -1.6,0 0.4,0 C2.9,0 4.2,1.9 3.5,5.2 C2.6,3.6 -0.6,3.9 -1.8,2.6 C-2.2,3.6 -2.8,4.4 -3.5,5 Z" fill="#3c3c3c"/></g><g transform="translate(8.4,3.2) scale(0.78)"><path d="M-6.3,13.6 C-6.3,10.8 -3.6,9.8 0,9.8 C3.6,9.8 6.3,10.8 6.3,13.6 C6.3,14.5 5.6,15 4.8,15 L-4.8,15 C-5.6,15 -6.3,14.5 -6.3,13.6 Z" fill="#9be02a" stroke="#6aa81a" stroke-width="0.7"/><path d="M-1.6,8 L1.6,8 L2.2,10.4 C1,11.4 -1,11.4 -2.2,10.4 Z" fill="#e0b48c"/><ellipse cx="0" cy="5.5" rx="3.1" ry="3.8" fill="#f2cda8"/><path d="M-3.5,5 C-4.2,0.8 -1.6,0 0.4,0 C2.9,0 4.2,1.9 3.5,5.2 C2.6,3.6 -0.6,3.9 -1.8,2.6 C-2.2,3.6 -2.8,4.4 -3.5,5 Z" fill="#3c3c3c"/></g></svg>
<span class="t" style="left:54.5px;top:334.81px;letter-spacing:-0.09px;">KI05- MI- M</span>
<svg style="position:absolute;left:22px;top:352.64px;" width="13.8" height="14.785714285714286" viewBox="0 0 14 15" ><g transform="translate(5,0) scale(0.72)"><path d="M-6.3,13.6 C-6.3,10.8 -3.6,9.8 0,9.8 C3.6,9.8 6.3,10.8 6.3,13.6 C6.3,14.5 5.6,15 4.8,15 L-4.8,15 C-5.6,15 -6.3,14.5 -6.3,13.6 Z" fill="#4aa6e8" stroke="#2d7fc0" stroke-width="0.7"/><path d="M-1.6,8 L1.6,8 L2.2,10.4 C1,11.4 -1,11.4 -2.2,10.4 Z" fill="#e0b48c"/><ellipse cx="0" cy="5.5" rx="3.1" ry="3.8" fill="#f2cda8"/><path d="M-3.5,5 C-4.2,0.8 -1.6,0 0.4,0 C2.9,0 4.2,1.9 3.5,5.2 C2.6,3.6 -0.6,3.9 -1.8,2.6 C-2.2,3.6 -2.8,4.4 -3.5,5 Z" fill="#3c3c3c"/></g><g transform="translate(8.4,3.2) scale(0.78)"><path d="M-6.3,13.6 C-6.3,10.8 -3.6,9.8 0,9.8 C3.6,9.8 6.3,10.8 6.3,13.6 C6.3,14.5 5.6,15 4.8,15 L-4.8,15 C-5.6,15 -6.3,14.5 -6.3,13.6 Z" fill="#9be02a" stroke="#6aa81a" stroke-width="0.7"/><path d="M-1.6,8 L1.6,8 L2.2,10.4 C1,11.4 -1,11.4 -2.2,10.4 Z" fill="#e0b48c"/><ellipse cx="0" cy="5.5" rx="3.1" ry="3.8" fill="#f2cda8"/><path d="M-3.5,5 C-4.2,0.8 -1.6,0 0.4,0 C2.9,0 4.2,1.9 3.5,5.2 C2.6,3.6 -0.6,3.9 -1.8,2.6 C-2.2,3.6 -2.8,4.4 -3.5,5 Z" fill="#3c3c3c"/></g></svg>
<span class="t" style="left:39px;top:353.84px;letter-spacing:-0.29px;">Konditionsgymnastik - M</span>
<svg style="position:absolute;left:11.5px;top:376.77px;" width="6.5" height="6.5" viewBox="0 0 6.5 6.5" ><path d='M6,0.5 L6,6 L0.5,6 Z' fill='#444'/></svg>
<svg style="position:absolute;left:22px;top:371.66999999999996px;" width="13.8" height="14.785714285714286" viewBox="0 0 14 15" ><g transform="translate(5,0) scale(0.72)"><path d="M-6.3,13.6 C-6.3,10.8 -3.6,9.8 0,9.8 C3.6,9.8 6.3,10.8 6.3,13.6 C6.3,14.5 5.6,15 4.8,15 L-4.8,15 C-5.6,15 -6.3,14.5 -6.3,13.6 Z" fill="#4aa6e8" stroke="#2d7fc0" stroke-width="0.7"/><path d="M-1.6,8 L1.6,8 L2.2,10.4 C1,11.4 -1,11.4 -2.2,10.4 Z" fill="#e0b48c"/><ellipse cx="0" cy="5.5" rx="3.1" ry="3.8" fill="#f2cda8"/><path d="M-3.5,5 C-4.2,0.8 -1.6,0 0.4,0 C2.9,0 4.2,1.9 3.5,5.2 C2.6,3.6 -0.6,3.9 -1.8,2.6 C-2.2,3.6 -2.8,4.4 -3.5,5 Z" fill="#3c3c3c"/></g><g transform="translate(8.4,3.2) scale(0.78)"><path d="M-6.3,13.6 C-6.3,10.8 -3.6,9.8 0,9.8 C3.6,9.8 6.3,10.8 6.3,13.6 C6.3,14.5 5.6,15 4.8,15 L-4.8,15 C-5.6,15 -6.3,14.5 -6.3,13.6 Z" fill="#9be02a" stroke="#6aa81a" stroke-width="0.7"/><path d="M-1.6,8 L1.6,8 L2.2,10.4 C1,11.4 -1,11.4 -2.2,10.4 Z" fill="#e0b48c"/><ellipse cx="0" cy="5.5" rx="3.1" ry="3.8" fill="#f2cda8"/><path d="M-3.5,5 C-4.2,0.8 -1.6,0 0.4,0 C2.9,0 4.2,1.9 3.5,5.2 C2.6,3.6 -0.6,3.9 -1.8,2.6 C-2.2,3.6 -2.8,4.4 -3.5,5 Z" fill="#3c3c3c"/></g></svg>
<span class="t" style="left:39px;top:372.87px;letter-spacing:-0.26px;">Leistungsriege M &amp; F</span>
<svg style="position:absolute;left:37.5px;top:390.7px;" width="13.8" height="14.785714285714286" viewBox="0 0 14 15" ><g transform="translate(5,0) scale(0.72)"><path d="M-6.3,13.6 C-6.3,10.8 -3.6,9.8 0,9.8 C3.6,9.8 6.3,10.8 6.3,13.6 C6.3,14.5 5.6,15 4.8,15 L-4.8,15 C-5.6,15 -6.3,14.5 -6.3,13.6 Z" fill="#4aa6e8" stroke="#2d7fc0" stroke-width="0.7"/><path d="M-1.6,8 L1.6,8 L2.2,10.4 C1,11.4 -1,11.4 -2.2,10.4 Z" fill="#e0b48c"/><ellipse cx="0" cy="5.5" rx="3.1" ry="3.8" fill="#f2cda8"/><path d="M-3.5,5 C-4.2,0.8 -1.6,0 0.4,0 C2.9,0 4.2,1.9 3.5,5.2 C2.6,3.6 -0.6,3.9 -1.8,2.6 C-2.2,3.6 -2.8,4.4 -3.5,5 Z" fill="#3c3c3c"/></g><g transform="translate(8.4,3.2) scale(0.78)"><path d="M-6.3,13.6 C-6.3,10.8 -3.6,9.8 0,9.8 C3.6,9.8 6.3,10.8 6.3,13.6 C6.3,14.5 5.6,15 4.8,15 L-4.8,15 C-5.6,15 -6.3,14.5 -6.3,13.6 Z" fill="#9be02a" stroke="#6aa81a" stroke-width="0.7"/><path d="M-1.6,8 L1.6,8 L2.2,10.4 C1,11.4 -1,11.4 -2.2,10.4 Z" fill="#e0b48c"/><ellipse cx="0" cy="5.5" rx="3.1" ry="3.8" fill="#f2cda8"/><path d="M-3.5,5 C-4.2,0.8 -1.6,0 0.4,0 C2.9,0 4.2,1.9 3.5,5.2 C2.6,3.6 -0.6,3.9 -1.8,2.6 C-2.2,3.6 -2.8,4.4 -3.5,5 Z" fill="#3c3c3c"/></g></svg>
<span class="t" style="left:54.5px;top:391.9px;letter-spacing:-0.21px;">LR01 Jahrgang 10-12</span>
<svg style="position:absolute;left:37.5px;top:409.73px;" width="13.8" height="14.785714285714286" viewBox="0 0 14 15" ><g transform="translate(5,0) scale(0.72)"><path d="M-6.3,13.6 C-6.3,10.8 -3.6,9.8 0,9.8 C3.6,9.8 6.3,10.8 6.3,13.6 C6.3,14.5 5.6,15 4.8,15 L-4.8,15 C-5.6,15 -6.3,14.5 -6.3,13.6 Z" fill="#4aa6e8" stroke="#2d7fc0" stroke-width="0.7"/><path d="M-1.6,8 L1.6,8 L2.2,10.4 C1,11.4 -1,11.4 -2.2,10.4 Z" fill="#e0b48c"/><ellipse cx="0" cy="5.5" rx="3.1" ry="3.8" fill="#f2cda8"/><path d="M-3.5,5 C-4.2,0.8 -1.6,0 0.4,0 C2.9,0 4.2,1.9 3.5,5.2 C2.6,3.6 -0.6,3.9 -1.8,2.6 C-2.2,3.6 -2.8,4.4 -3.5,5 Z" fill="#3c3c3c"/></g><g transform="translate(8.4,3.2) scale(0.78)"><path d="M-6.3,13.6 C-6.3,10.8 -3.6,9.8 0,9.8 C3.6,9.8 6.3,10.8 6.3,13.6 C6.3,14.5 5.6,15 4.8,15 L-4.8,15 C-5.6,15 -6.3,14.5 -6.3,13.6 Z" fill="#9be02a" stroke="#6aa81a" stroke-width="0.7"/><path d="M-1.6,8 L1.6,8 L2.2,10.4 C1,11.4 -1,11.4 -2.2,10.4 Z" fill="#e0b48c"/><ellipse cx="0" cy="5.5" rx="3.1" ry="3.8" fill="#f2cda8"/><path d="M-3.5,5 C-4.2,0.8 -1.6,0 0.4,0 C2.9,0 4.2,1.9 3.5,5.2 C2.6,3.6 -0.6,3.9 -1.8,2.6 C-2.2,3.6 -2.8,4.4 -3.5,5 Z" fill="#3c3c3c"/></g></svg>
<span class="t" style="left:54.5px;top:410.93px;letter-spacing:-0.16px;">LR02 Jahrgang 09 - 01</span>
<svg style="position:absolute;left:37.5px;top:428.76px;" width="13.8" height="14.785714285714286" viewBox="0 0 14 15" ><g transform="translate(5,0) scale(0.72)"><path d="M-6.3,13.6 C-6.3,10.8 -3.6,9.8 0,9.8 C3.6,9.8 6.3,10.8 6.3,13.6 C6.3,14.5 5.6,15 4.8,15 L-4.8,15 C-5.6,15 -6.3,14.5 -6.3,13.6 Z" fill="#4aa6e8" stroke="#2d7fc0" stroke-width="0.7"/><path d="M-1.6,8 L1.6,8 L2.2,10.4 C1,11.4 -1,11.4 -2.2,10.4 Z" fill="#e0b48c"/><ellipse cx="0" cy="5.5" rx="3.1" ry="3.8" fill="#f2cda8"/><path d="M-3.5,5 C-4.2,0.8 -1.6,0 0.4,0 C2.9,0 4.2,1.9 3.5,5.2 C2.6,3.6 -0.6,3.9 -1.8,2.6 C-2.2,3.6 -2.8,4.4 -3.5,5 Z" fill="#3c3c3c"/></g><g transform="translate(8.4,3.2) scale(0.78)"><path d="M-6.3,13.6 C-6.3,10.8 -3.6,9.8 0,9.8 C3.6,9.8 6.3,10.8 6.3,13.6 C6.3,14.5 5.6,15 4.8,15 L-4.8,15 C-5.6,15 -6.3,14.5 -6.3,13.6 Z" fill="#9be02a" stroke="#6aa81a" stroke-width="0.7"/><path d="M-1.6,8 L1.6,8 L2.2,10.4 C1,11.4 -1,11.4 -2.2,10.4 Z" fill="#e0b48c"/><ellipse cx="0" cy="5.5" rx="3.1" ry="3.8" fill="#f2cda8"/><path d="M-3.5,5 C-4.2,0.8 -1.6,0 0.4,0 C2.9,0 4.2,1.9 3.5,5.2 C2.6,3.6 -0.6,3.9 -1.8,2.6 C-2.2,3.6 -2.8,4.4 -3.5,5 Z" fill="#3c3c3c"/></g></svg>
<span class="t" style="left:54.5px;top:429.96px;letter-spacing:-0.16px;">LR03 Jahrgang 06 - 08</span>
<div style="left:7.5px;top:446.09px;width:153px;height:18.6px;background:#d9e8fb"></div>
<svg style="position:absolute;left:37.5px;top:447.78999999999996px;" width="13.8" height="14.785714285714286" viewBox="0 0 14 15" ><g transform="translate(5,0) scale(0.72)"><path d="M-6.3,13.6 C-6.3,10.8 -3.6,9.8 0,9.8 C3.6,9.8 6.3,10.8 6.3,13.6 C6.3,14.5 5.6,15 4.8,15 L-4.8,15 C-5.6,15 -6.3,14.5 -6.3,13.6 Z" fill="#4aa6e8" stroke="#2d7fc0" stroke-width="0.7"/><path d="M-1.6,8 L1.6,8 L2.2,10.4 C1,11.4 -1,11.4 -2.2,10.4 Z" fill="#e0b48c"/><ellipse cx="0" cy="5.5" rx="3.1" ry="3.8" fill="#f2cda8"/><path d="M-3.5,5 C-4.2,0.8 -1.6,0 0.4,0 C2.9,0 4.2,1.9 3.5,5.2 C2.6,3.6 -0.6,3.9 -1.8,2.6 C-2.2,3.6 -2.8,4.4 -3.5,5 Z" fill="#3c3c3c"/></g><g transform="translate(8.4,3.2) scale(0.78)"><path d="M-6.3,13.6 C-6.3,10.8 -3.6,9.8 0,9.8 C3.6,9.8 6.3,10.8 6.3,13.6 C6.3,14.5 5.6,15 4.8,15 L-4.8,15 C-5.6,15 -6.3,14.5 -6.3,13.6 Z" fill="#9be02a" stroke="#6aa81a" stroke-width="0.7"/><path d="M-1.6,8 L1.6,8 L2.2,10.4 C1,11.4 -1,11.4 -2.2,10.4 Z" fill="#e0b48c"/><ellipse cx="0" cy="5.5" rx="3.1" ry="3.8" fill="#f2cda8"/><path d="M-3.5,5 C-4.2,0.8 -1.6,0 0.4,0 C2.9,0 4.2,1.9 3.5,5.2 C2.6,3.6 -0.6,3.9 -1.8,2.6 C-2.2,3.6 -2.8,4.4 -3.5,5 Z" fill="#3c3c3c"/></g></svg>
<span class="t" style="left:54.5px;top:448.99px;letter-spacing:-0.2px;">LR04 Jahrgang ab 06</span>
<svg style="position:absolute;left:37.5px;top:466.82px;" width="13.8" height="14.785714285714286" viewBox="0 0 14 15" ><g transform="translate(5,0) scale(0.72)"><path d="M-6.3,13.6 C-6.3,10.8 -3.6,9.8 0,9.8 C3.6,9.8 6.3,10.8 6.3,13.6 C6.3,14.5 5.6,15 4.8,15 L-4.8,15 C-5.6,15 -6.3,14.5 -6.3,13.6 Z" fill="#4aa6e8" stroke="#2d7fc0" stroke-width="0.7"/><path d="M-1.6,8 L1.6,8 L2.2,10.4 C1,11.4 -1,11.4 -2.2,10.4 Z" fill="#e0b48c"/><ellipse cx="0" cy="5.5" rx="3.1" ry="3.8" fill="#f2cda8"/><path d="M-3.5,5 C-4.2,0.8 -1.6,0 0.4,0 C2.9,0 4.2,1.9 3.5,5.2 C2.6,3.6 -0.6,3.9 -1.8,2.6 C-2.2,3.6 -2.8,4.4 -3.5,5 Z" fill="#3c3c3c"/></g><g transform="translate(8.4,3.2) scale(0.78)"><path d="M-6.3,13.6 C-6.3,10.8 -3.6,9.8 0,9.8 C3.6,9.8 6.3,10.8 6.3,13.6 C6.3,14.5 5.6,15 4.8,15 L-4.8,15 C-5.6,15 -6.3,14.5 -6.3,13.6 Z" fill="#9be02a" stroke="#6aa81a" stroke-width="0.7"/><path d="M-1.6,8 L1.6,8 L2.2,10.4 C1,11.4 -1,11.4 -2.2,10.4 Z" fill="#e0b48c"/><ellipse cx="0" cy="5.5" rx="3.1" ry="3.8" fill="#f2cda8"/><path d="M-3.5,5 C-4.2,0.8 -1.6,0 0.4,0 C2.9,0 4.2,1.9 3.5,5.2 C2.6,3.6 -0.6,3.9 -1.8,2.6 C-2.2,3.6 -2.8,4.4 -3.5,5 Z" fill="#3c3c3c"/></g></svg>
<span class="t" style="left:54.5px;top:468.02px;letter-spacing:-0.17px;">Minis Jahrgang 13 - 15</span>
<div style="left:161px;top:193px;width:8px;height:287px;background:#f1f1f1"></div>
<div style="left:162px;top:302px;width:6.5px;height:143.5px;background:#c1c1c1"></div>
<svg style="position:absolute;left:162.4px;top:195.6px;" width="5.2" height="4" viewBox="0 0 6 4" ><path d='M0.6,3.6 L3,1 L5.4,3.6' fill='none' stroke='#404040' stroke-width='1.5'/></svg>
<svg style="position:absolute;left:162.4px;top:471.5px;" width="5.2" height="4" viewBox="0 0 6 4" ><path d='M0.6,0.6 L3,3.2 L5.4,0.6' fill='none' stroke='#404040' stroke-width='1.5'/></svg>
<div style="left:170px;top:193px;width:193px;height:19px;background:linear-gradient(#fafafa,#ececec);border-bottom:1px solid #d0d0d0"></div>
<div style="left:221px;top:193px;width:1px;height:18px;background:#d8d8d8"></div>
<div style="left:313px;top:193px;width:1px;height:18px;background:#d8d8d8"></div>
<span class="t" style="left:174px;top:196.0px;letter-spacing:-0.2px;">Funktion</span>
<span class="t" style="left:226px;top:196.0px;letter-spacing:-0.18px;">Name (vollständi...</span>
<span class="t" style="left:318px;top:196.0px;">Adresse</span>
<div style="left:170px;top:212.5px;width:193px;height:19.15px;border-bottom:1px solid #efefef;"></div>
<span class="t" style="left:174px;top:215.9px;letter-spacing:-0.4px;">Spieler</span>
<span class="t" style="left:226px;top:215.9px;">Axmann Hanna</span>
<span class="t" style="left:318px;top:215.9px;">Hindenburgstr. 12</span>
<div style="left:170px;top:231.65px;width:193px;height:19.15px;border-bottom:1px solid #efefef;"></div>
<span class="t" style="left:174px;top:235.05px;letter-spacing:-0.4px;">Spieler</span>
<span class="t" style="left:226px;top:235.05px;">Böttner Lia</span>
<span class="t" style="left:318px;top:235.05px;">Landoisstr. 4</span>
<div style="left:170px;top:250.8px;width:193px;height:19.15px;border-bottom:1px solid #efefef;"></div>
<span class="t" style="left:174px;top:254.2px;letter-spacing:-0.4px;">Spieler</span>
<span class="t" style="left:226px;top:254.2px;">Esser Karolina</span>
<span class="t" style="left:318px;top:254.2px;">Goebenstr. 23</span>
<div style="left:170px;top:269.95px;width:193px;height:19.15px;border-bottom:1px solid #efefef;"></div>
<span class="t" style="left:174px;top:273.35px;letter-spacing:-0.4px;">Spieler</span>
<span class="t" style="left:226px;top:273.35px;">Kehl Lene</span>
<span class="t" style="left:318px;top:273.35px;">Mindener Str. 8</span>
<div style="left:170px;top:289.1px;width:193px;height:19.15px;border-bottom:1px solid #efefef;"></div>
<span class="t" style="left:174px;top:292.5px;letter-spacing:-0.4px;">Trainer</span>
<span class="t" style="left:226px;top:292.5px;">Kehl Lene</span>
<span class="t" style="left:318px;top:292.5px;">Mindener Str. 8</span>
<div style="left:170px;top:308.25px;width:193px;height:19.15px;border-bottom:1px solid #efefef;"></div>
<span class="t" style="left:174px;top:311.65px;letter-spacing:-0.4px;">Spieler</span>
<span class="t" style="left:226px;top:311.65px;">Knorr Laura</span>
<span class="t" style="left:318px;top:311.65px;">Breul 200</span>
<div style="left:170px;top:327.4px;width:193px;height:19.15px;border-bottom:1px solid #efefef;"></div>
<span class="t" style="left:174px;top:330.8px;letter-spacing:-0.4px;">Spieler</span>
<span class="t" style="left:226px;top:330.8px;">Kranz Finnja</span>
<span class="t" style="left:318px;top:330.8px;">Möserweg 3</span>
<div style="left:170px;top:346.54999999999995px;width:193px;height:19.15px;border-bottom:1px solid #efefef;"></div>
<span class="t" style="left:174px;top:349.95px;letter-spacing:-0.4px;">Spieler</span>
<span class="t" style="left:226px;top:349.95px;">Kämpf Elfriede</span>
<span class="t" style="left:318px;top:349.95px;">Neißestr. 21</span>
<div style="left:170px;top:365.7px;width:193px;height:19.15px;border-bottom:1px solid #efefef;"></div>
<span class="t" style="left:174px;top:369.1px;letter-spacing:-0.4px;">Spieler</span>
<span class="t" style="left:226px;top:369.1px;">Mucha Judith</span>
<span class="t" style="left:318px;top:369.1px;">Wildpfad 4</span>
<div style="left:170px;top:384.85px;width:193px;height:19.15px;background:#dfe8f6;border-top:1px dotted #bccfee;border-bottom:1px dotted #bccfee;"></div>
<span class="t" style="left:174px;top:388.25px;letter-spacing:-0.4px;">Spieler</span>
<span class="t" style="left:226px;top:388.25px;">Müller Anna</span>
<span class="t" style="left:318px;top:388.25px;">Musterweg 10</span>
<div style="left:170px;top:404.0px;width:193px;height:19.15px;border-bottom:1px solid #efefef;"></div>
<span class="t" style="left:174px;top:407.4px;letter-spacing:-0.4px;">Spieler</span>
<span class="t" style="left:226px;top:407.4px;">Norris Elfriede</span>
<span class="t" style="left:318px;top:407.4px;">Kappenberger Damm</span>
<div style="left:170px;top:423.15px;width:193px;height:19.15px;border-bottom:1px solid #efefef;"></div>
<span class="t" style="left:174px;top:426.55px;letter-spacing:-0.4px;">Spieler</span>
<span class="t" style="left:226px;top:426.55px;">Reil Lana</span>
<span class="t" style="left:318px;top:426.55px;">Pulverschuppen 5</span>
<div style="left:170px;top:442.29999999999995px;width:193px;height:19.15px;border-bottom:1px solid #efefef;"></div>
<span class="t" style="left:174px;top:445.7px;letter-spacing:-0.4px;">Spieler</span>
<span class="t" style="left:226px;top:445.7px;">Reinartz Frida</span>
<span class="t" style="left:318px;top:445.7px;">Zülpicher Str. 9</span>
<div style="left:170px;top:461.45px;width:193px;height:19.15px;border-bottom:1px solid #efefef;"></div>
<span class="t" style="left:174px;top:464.85px;letter-spacing:-0.4px;">Spieler</span>
<span class="t" style="left:226px;top:464.85px;">Retzlaff Philine</span>
<span class="t" style="left:318px;top:464.85px;">Kempener Str. 11</span>
<div style="left:0px;top:0px;width:1000px;height:1px;background:#000"></div>
<div style="left:0px;top:1px;width:1px;height:479px;background:#7a7a7a"></div>
<div style="left:0px;top:42px;width:1px;height:45px;background:#1d6e42"></div>
<div style="left:999px;top:1px;width:1px;height:479px;background:#4a4a4a"></div>
<div style="left:0px;top:479px;width:1000px;height:1px;background:#5a5a5a"></div>
<div style="left:997px;top:92px;width:3px;height:386px;background:linear-gradient(90deg,#a8a8a8,#d3dae8 45%)"></div>
<div style="left:363px;top:477px;width:637px;height:2px;background:#ececec"></div>
<div style="left:363px;top:92px;width:634px;height:385px;background:#fff;border:1px solid #8e8e8e;overflow:hidden">
<span class="h2" style="left:8.3px;top:11.7px;">TV Muster</span>
<svg style="position:absolute;left:512.4px;top:3.6px;" width="29.6" height="29.6" viewBox="-13 -13 26 26" ><path d="M-0.5,-0.5 L-9,-2.3 C-11.8,-2.9 -13,-5.2 -12.5,-7.3 C-12.1,-9.1 -11,-9.9 -10.1,-10.1 C-9.9,-11 -9.1,-12.1 -7.3,-12.5 C-5.2,-13 -2.9,-11.8 -2.3,-9 Z" fill="#3fae3a" transform="rotate(0)"/><path d="M-0.5,-0.5 L-9,-2.3 C-11.8,-2.9 -13,-5.2 -12.5,-7.3 C-12.1,-9.1 -11,-9.9 -10.1,-10.1 C-9.9,-11 -9.1,-12.1 -7.3,-12.5 C-5.2,-13 -2.9,-11.8 -2.3,-9 Z" fill="#0f8f3d" transform="rotate(90)"/><path d="M-0.5,-0.5 L-9,-2.3 C-11.8,-2.9 -13,-5.2 -12.5,-7.3 C-12.1,-9.1 -11,-9.9 -10.1,-10.1 C-9.9,-11 -9.1,-12.1 -7.3,-12.5 C-5.2,-13 -2.9,-11.8 -2.3,-9 Z" fill="#86bc25" transform="rotate(180)"/><path d="M-0.5,-0.5 L-9,-2.3 C-11.8,-2.9 -13,-5.2 -12.5,-7.3 C-12.1,-9.1 -11,-9.9 -10.1,-10.1 C-9.9,-11 -9.1,-12.1 -7.3,-12.5 C-5.2,-13 -2.9,-11.8 -2.3,-9 Z" fill="#2eaa67" transform="rotate(270)"/></svg>
<span class="h2" style="left:544.6px;top:9.7px;color:#2dab66;font-size:16.2px;line-height:20px;-webkit-text-stroke:0.5px #2dab66;transform:scaleX(0.96);transform-origin:0 0">CLUBDESK</span>
<div style="left:0px;top:38px;width:633px;height:41px;background:#2dab66"></div>
<svg style="position:absolute;left:6.5px;top:47.5px;" width="22.3" height="22.3" viewBox="-12.5 -12.5 25 25" ><path d="M-0.7,-0.7 L-8.6,-1.6 C-11.3,-2 -12.5,-4.4 -12.1,-6.6 C-11.8,-8.6 -10.6,-9.4 -9.7,-9.7 C-9.4,-10.6 -8.6,-11.8 -6.6,-12.1 C-4.4,-12.5 -2,-11.3 -1.6,-8.6 Z" fill="#fff" transform="rotate(0)"/><path d="M-0.7,-0.7 L-8.6,-1.6 C-11.3,-2 -12.5,-4.4 -12.1,-6.6 C-11.8,-8.6 -10.6,-9.4 -9.7,-9.7 C-9.4,-10.6 -8.6,-11.8 -6.6,-12.1 C-4.4,-12.5 -2,-11.3 -1.6,-8.6 Z" fill="#fff" transform="rotate(90)"/><path d="M-0.7,-0.7 L-8.6,-1.6 C-11.3,-2 -12.5,-4.4 -12.1,-6.6 C-11.8,-8.6 -10.6,-9.4 -9.7,-9.7 C-9.4,-10.6 -8.6,-11.8 -6.6,-12.1 C-4.4,-12.5 -2,-11.3 -1.6,-8.6 Z" fill="#fff" transform="rotate(180)"/><path d="M-0.7,-0.7 L-8.6,-1.6 C-11.3,-2 -12.5,-4.4 -12.1,-6.6 C-11.8,-8.6 -10.6,-9.4 -9.7,-9.7 C-9.4,-10.6 -8.6,-11.8 -6.6,-12.1 C-4.4,-12.5 -2,-11.3 -1.6,-8.6 Z" fill="#fff" transform="rotate(270)"/></svg>
<svg style="position:absolute;left:41px;top:46.3px;" width="24.4" height="24.4" viewBox="0 0 27 27" ><rect x="0" y="0" width="27" height="27" rx="2.2" fill="#fff"/><path d="M2,25 L2,21.5 C2,17.5 6,16 9.5,15 L17.5,15 C21,16 25,17.5 25,21.5 L25,25 Z" fill="#2dab66"/><ellipse cx="13.5" cy="10.8" rx="4.6" ry="6" fill="#d5edd9"/><path d="M8.6,8.4 C8,3.4 11,2 13.8,2 C17,2 19.4,4 18.5,8.6 C16.5,7 12,7.6 10.5,5.8 C10,7 9.4,7.8 8.6,8.4 Z" fill="#2dab66"/><path d="M10.5,15.2 L16.5,15.2 L15.8,17.2 C14.5,18.2 12.5,18.2 11.2,17.2 Z" fill="#d5edd9"/></svg>
<svg style="position:absolute;left:47.6px;top:72.2px;" width="10.8" height="4.4" viewBox="0 0 12 5" ><path d="M0,5 L6,0 L12,5 Z" fill="#fff"/></svg>
<svg style="position:absolute;left:78.5px;top:48px;will-change:transform" width="21.2" height="20.2" viewBox="0 0 24 23" ><rect x="0.9" y="3.4" width="22.2" height="18.8" rx="1.6" fill="none" stroke="#fff" stroke-width="1.8"/><rect x="0.9" y="3.4" width="22.2" height="4.4" fill="#fff"/><rect x="3.9000000000000004" y="0" width="2.6" height="5.6" rx="0.8" fill="#fff" stroke="#2dab66" stroke-width="0.7"/><rect x="10.7" y="0" width="2.6" height="5.6" rx="0.8" fill="#fff" stroke="#2dab66" stroke-width="0.7"/><rect x="17.5" y="0" width="2.6" height="5.6" rx="0.8" fill="#fff" stroke="#2dab66" stroke-width="0.7"/><text x="12.2" y="19.2" font-family="Liberation Sans, sans-serif" font-weight="bold" font-size="11" fill="#fff" text-anchor="middle">15</text></svg>
<svg style="position:absolute;left:114px;top:47.8px;" width="22" height="20.2" viewBox="0 0 25 23" ><path d="M1.9,6.8 C1.9,6 2.5,5.6 3.2,5.6 L8.6,5.6 C9.4,5.6 10,6.2 10.2,7 L10.6,9.2 L1.9,9.2 Z" fill="#fff"/><path d="M0.4,10.1 L20.8,10.1 L20.8,22.6 L0.4,22.6 Z" fill="#fff"/><path d="M12,-0.4 L19.8,-0.4 L25.4,5.4 L25.4,17.3 L12,17.3 Z" fill="#2dab66"/><path d="M12.8,0.4 L19.4,0.4 L24.6,5.8 L24.6,16.5 L12.8,16.5 Z" fill="#fff"/><path d="M14.2,1.8 L18.5,1.8 L18.5,6.7 L23.2,6.7 L23.2,15.1 L14.2,15.1 Z" fill="#2dab66"/></svg>
<svg style="position:absolute;left:149px;top:50.6px;" width="23" height="16.4" viewBox="0 0 26 18" ><rect x="0" y="0" width="26" height="18" rx="1.6" fill="#fff"/><path d="M1.8,1.8 L11.8,10.8 C12.6,11.5 13.4,11.5 14.2,10.8 L24.2,1.8" fill="none" stroke="#7fcfa3" stroke-width="1.3" stroke-linecap="round"/><path d="M1.8,16.4 L8.8,9.4 M24.2,16.4 L17.2,9.4" fill="none" stroke="#7fcfa3" stroke-width="1.3" stroke-linecap="round"/></svg>
<svg style="position:absolute;left:186.4px;top:49px;" width="20" height="20" viewBox="0 0 22 22" ><circle cx="11" cy="11" r="10.8" fill="#fff"/><path d="M4.6,5 C6.4,3.4 8.4,2.6 10.6,3 L12.4,4.4 L14.4,4 L15.2,5.4 L13,6.2 L12.2,8 L10,8.6 L8.8,10.6 L7,10 L6,7.6 Z" fill="#2dab66"/><path d="M11,12 L13.6,11.6 L15.8,13.2 L15.4,15.4 L13.6,17 L12.8,19.6 L11.8,19.4 L11.4,16 L10.2,14 Z" fill="#2dab66"/><path d="M17.4,7.2 L19.2,8.4 L19,10 L17.6,9.2 Z" fill="#2dab66"/></svg>
<svg style="position:absolute;left:222px;top:50.4px;will-change:transform" width="21" height="18.8" viewBox="0 0 24 21.4" ><rect x="0.4" y="18.4" width="4.8" height="1.9" fill="#fff"/><rect x="0.4" y="15.6" width="4.8" height="1.9" fill="#fff"/><rect x="0.4" y="12.8" width="4.8" height="1.9" fill="#fff"/><rect x="7.4" y="18.4" width="4.8" height="1.9" fill="#fff"/><rect x="7.4" y="15.6" width="4.8" height="1.9" fill="#fff"/><rect x="7.4" y="12.8" width="4.8" height="1.9" fill="#fff"/><rect x="7.4" y="10.0" width="4.8" height="1.9" fill="#fff"/><rect x="7.4" y="7.2" width="4.8" height="1.9" fill="#fff"/><rect x="7.4" y="4.4" width="4.8" height="1.9" fill="#fff"/><rect x="7.4" y="1.6" width="4.8" height="1.9" fill="#fff"/><rect x="14.6" y="12.0" width="4.8" height="1.9" fill="#fff"/><rect x="14.6" y="9.2" width="4.8" height="1.9" fill="#fff"/><rect x="14.6" y="6.4" width="4.8" height="1.9" fill="#fff"/><rect x="14.6" y="3.6" width="4.8" height="1.9" fill="#fff"/><circle cx="18" cy="15.6" r="5.9" fill="#fff" stroke="#2dab66" stroke-width="1"/><text x="18" y="19.2" font-family="Liberation Sans, sans-serif" font-weight="bold" font-size="9.6" fill="#2dab66" text-anchor="middle">$</text></svg>
<svg style="position:absolute;left:527.2px;top:52.2px;" width="13.8" height="13.8" viewBox="-7.6 -7.6 15.2 15.2" ><path d="M-1.45,-7.6 L1.45,-7.6 L2.0,-4.4 L-2.0,-4.4 Z" fill="#fff" transform="rotate(0)"/><path d="M-1.45,-7.6 L1.45,-7.6 L2.0,-4.4 L-2.0,-4.4 Z" fill="#fff" transform="rotate(45)"/><path d="M-1.45,-7.6 L1.45,-7.6 L2.0,-4.4 L-2.0,-4.4 Z" fill="#fff" transform="rotate(90)"/><path d="M-1.45,-7.6 L1.45,-7.6 L2.0,-4.4 L-2.0,-4.4 Z" fill="#fff" transform="rotate(135)"/><path d="M-1.45,-7.6 L1.45,-7.6 L2.0,-4.4 L-2.0,-4.4 Z" fill="#fff" transform="rotate(180)"/><path d="M-1.45,-7.6 L1.45,-7.6 L2.0,-4.4 L-2.0,-4.4 Z" fill="#fff" transform="rotate(225)"/><path d="M-1.45,-7.6 L1.45,-7.6 L2.0,-4.4 L-2.0,-4.4 Z" fill="#fff" transform="rotate(270)"/><path d="M-1.45,-7.6 L1.45,-7.6 L2.0,-4.4 L-2.0,-4.4 Z" fill="#fff" transform="rotate(315)"/><circle r="5.5" fill="#fff"/><circle r="2.2" fill="#2dab66"/></svg>
<svg style="position:absolute;left:553px;top:52px;will-change:transform" width="14.4" height="14.4" viewBox="0 0 16 16" ><circle cx="8" cy="8" r="6.9" fill="none" stroke="#fff" stroke-width="1.3"/><text x="8" y="11.8" font-family="Liberation Sans, sans-serif" font-weight="bold" font-size="10.5" fill="#fff" text-anchor="middle">?</text></svg>
<svg style="position:absolute;left:579.2px;top:52px;" width="14.4" height="14.4" viewBox="0 0 16 16" ><path d="M4.4,3.8 A6,6 0 1 0 11.6,3.8" fill="none" stroke="#fff" stroke-width="2" stroke-linecap="round"/><path d="M8,1.1 L8,7.4" stroke="#fff" stroke-width="2" stroke-linecap="round"/></svg>
<div style="left:0px;top:79px;width:633px;height:23px;background:#f4ece1"></div>
<div style="left:0px;top:84px;width:116px;height:18px;border:1px solid #a3bfe8;border-left:none;border-bottom:none;border-radius:0 3px 0 0;background:linear-gradient(#dce7f7,#cddcf3)"></div>
<div style="left:0px;top:101.2px;width:633px;height:3px;background:#dbe6f5;border-top:1px solid #b4cbee"></div>
<div style="left:117.4px;top:84px;width:91px;height:19px;border:1px solid #a3bfe8;border-bottom:none;border-radius:3px 3px 0 0;background:linear-gradient(#ffffff,#e6eefa 55%,#dbe6f5)"></div>
<div style="left:118.4px;top:101px;width:89px;height:3px;background:#dbe6f5"></div>
<svg style="position:absolute;left:1.5px;top:86.4px;" width="13.2" height="13.2" viewBox="0 0 15 15" ><rect x="0.5" y="0.5" width="8.5" height="11" fill="#b7b3c9" stroke="#9e9ab6" stroke-width="0.6"/><g transform="translate(8.6,1.2) scale(0.86)"><path d="M-6.3,13.6 C-6.3,10.8 -3.6,9.8 0,9.8 C3.6,9.8 6.3,10.8 6.3,13.6 C6.3,14.5 5.6,15 4.8,15 L-4.8,15 C-5.6,15 -6.3,14.5 -6.3,13.6 Z" fill="#c6dcf6" stroke="#8fb4e6" stroke-width="0.7"/><path d="M-1.6,8 L1.6,8 L2.2,10.4 C1,11.4 -1,11.4 -2.2,10.4 Z" fill="#e0b48c"/><ellipse cx="0" cy="5.5" rx="3.1" ry="3.8" fill="#f2cda8"/><path d="M-3.5,5 C-4.2,0.8 -1.6,0 0.4,0 C2.9,0 4.2,1.9 3.5,5.2 C2.6,3.6 -0.6,3.9 -1.8,2.6 C-2.2,3.6 -2.8,4.4 -3.5,5 Z" fill="#3c3c3c"/></g></svg>
<span class="p" style="left:18px;top:87.9px;color:#416aa3;font-size:9.25px">Kontakte und Gruppen</span>
<svg style="position:absolute;left:122.5px;top:86.4px;" width="13.2" height="13.2" viewBox="0 0 15 15" ><rect x="0.5" y="0.5" width="8.5" height="11" fill="#b7b3c9" stroke="#9e9ab6" stroke-width="0.6"/><g transform="translate(8.6,1.2) scale(0.86)"><path d="M-6.3,13.6 C-6.3,10.8 -3.6,9.8 0,9.8 C3.6,9.8 6.3,10.8 6.3,13.6 C6.3,14.5 5.6,15 4.8,15 L-4.8,15 C-5.6,15 -6.3,14.5 -6.3,13.6 Z" fill="#c6dcf6" stroke="#8fb4e6" stroke-width="0.7"/><path d="M-1.6,8 L1.6,8 L2.2,10.4 C1,11.4 -1,11.4 -2.2,10.4 Z" fill="#e0b48c"/><ellipse cx="0" cy="5.5" rx="3.1" ry="3.8" fill="#f2cda8"/><path d="M-3.5,5 C-4.2,0.8 -1.6,0 0.4,0 C2.9,0 4.2,1.9 3.5,5.2 C2.6,3.6 -0.6,3.9 -1.8,2.6 C-2.2,3.6 -2.8,4.4 -3.5,5 Z" fill="#3c3c3c"/></g></svg>
<span class="pb" style="left:138.6px;top:87.9px;">Müller Anna</span>
<svg style="position:absolute;left:196.6px;top:87.2px;" width="7.8" height="7.8" viewBox="0 0 7 7" ><rect x="0.4" y="0.4" width="6.2" height="6.2" rx="1" fill="#e3ecf9" stroke="#b7cdee" stroke-width="0.5"/><path d="M2.1,2.1 L4.9,4.9 M4.9,2.1 L2.1,4.9" stroke="#6f92c6" stroke-width="1"/></svg>
<div style="left:0px;top:104px;width:633px;height:48.5px;background:linear-gradient(#d5e1f3,#cbdaee);border-bottom:1px solid #a9c3e6"></div>
<div class="grp" style="left:-2px;top:106px;width:228px;height:43.5px;"></div>
<div class="grp" style="left:228.3px;top:106px;width:84px;height:43.5px;"></div>
<svg style="position:absolute;left:5px;top:114.4px;" width="25" height="24" viewBox="0 0 25 24" ><defs><linearGradient id="fy" x1="0" y1="0" x2="0" y2="1"><stop offset="0" stop-color="#ffe26a"/><stop offset="1" stop-color="#f0b400"/></linearGradient><linearGradient id="fw" x1="0" y1="0" x2="0" y2="1"><stop offset="0" stop-color="#f6f4ec"/><stop offset="1" stop-color="#dedbcd"/></linearGradient></defs><rect x="0.6" y="0.6" width="23.8" height="22.8" rx="2" fill="url(#fy)" stroke="#d79a00" stroke-width="1"/><rect x="3.6" y="1.2" width="17.8" height="13.4" fill="url(#fw)" stroke="#e8c860" stroke-width="0.5"/><rect x="6" y="17.4" width="13" height="6" fill="#d9d9de" stroke="#c99a10" stroke-width="0.7"/><rect x="8" y="19" width="4.4" height="3.4" fill="#f0b400"/><rect x="14.4" y="13.4" width="10" height="10" rx="1" fill="#f4f4f4" stroke="#bdbdbd" stroke-width="0.8"/><path d="M17,16 L22,21 M22,16 L17,21" stroke="#777" stroke-width="1.5"/></svg>
<span class="p" style="left:33.5px;top:115.5px;">Speichern &amp;</span>
<span class="p" style="left:39px;top:128.5px;">Schließen</span>
<svg style="position:absolute;left:89px;top:114.4px;" width="24.6" height="24" viewBox="0 0 25 24" ><defs><linearGradient id="fy" x1="0" y1="0" x2="0" y2="1"><stop offset="0" stop-color="#ffe26a"/><stop offset="1" stop-color="#f0b400"/></linearGradient><linearGradient id="fw" x1="0" y1="0" x2="0" y2="1"><stop offset="0" stop-color="#f6f4ec"/><stop offset="1" stop-color="#dedbcd"/></linearGradient></defs><rect x="0.6" y="0.6" width="23.8" height="22.8" rx="2" fill="url(#fy)" stroke="#d79a00" stroke-width="1"/><rect x="3.6" y="1.2" width="17.8" height="13.4" fill="url(#fw)" stroke="#e8c860" stroke-width="0.5"/><rect x="6" y="17.4" width="13" height="6" fill="#d9d9de" stroke="#c99a10" stroke-width="0.7"/><rect x="8" y="19" width="4.4" height="3.4" fill="#f0b400"/></svg>
<span class="p" style="left:118px;top:122.1px;">Speichern</span>
<svg style="position:absolute;left:165.5px;top:112px;" width="11" height="11" viewBox="0 0 11 11" ><rect x="0.5" y="0.5" width="10" height="10" rx="1" fill="#f4f4f4" stroke="#bdbdbd" stroke-width="0.8"/><path d="M3,3 L8,8 M8,3 L3,8" stroke="#777" stroke-width="1.5"/></svg>
<span class="p" style="left:181px;top:113.1px;">Schließen</span>
<svg style="position:absolute;left:164.6px;top:131px;" width="11.8" height="11.8" viewBox="0 0 11.5 11.5" ><path d="M1.2,2.6 L2.8,1 L5.75,3.9 L8.7,1 L10.3,2.6 L7.5,5.6 L10.5,8.7 L8.8,10.4 L5.75,7.4 L2.7,10.4 L1,8.7 L4,5.6 Z" fill="#e23b24" stroke="#c22a16" stroke-width="0.6" stroke-linejoin="round"/></svg>
<span class="p" style="left:181px;top:131.1px;">Löschen</span>
<svg style="position:absolute;left:235px;top:116px;" width="23.6" height="21" viewBox="0 0 24 21" ><defs><linearGradient id="pg" x1="0" y1="0" x2="0" y2="1"><stop offset="0" stop-color="#e2e3df"/><stop offset="1" stop-color="#b2b6b0"/></linearGradient></defs><path d="M6,0.6 L16,0.6 L19,3.4 L19,9 L6,9 Z" fill="#fafafa" stroke="#c4c4c0" stroke-width="0.7"/><rect x="0.6" y="7.6" width="22.8" height="8.6" rx="1.6" fill="url(#pg)" stroke="#a2a69e" stroke-width="0.8"/><rect x="2.4" y="10.4" width="19.2" height="1.8" fill="#80847e"/><path d="M4.6,14.6 L19.4,14.6 L20.6,20.4 L3.4,20.4 Z" fill="#fcfcfc" stroke="#c4c8c0" stroke-width="0.7"/><rect x="3" y="16.2" width="18" height="1.2" fill="#d0d4d0"/></svg>
<span class="p" style="left:263px;top:122.1px;">Drucken</span>
<svg style="position:absolute;left:299.6px;top:126.4px;" width="4.6" height="3" viewBox="0 0 5 3" ><path d='M0,0 L5,0 L2.5,3 Z' fill='#222'/></svg>
<div style="left:0px;top:175px;width:633px;height:1px;background:#dcdcdc"></div>
<div style="left:3px;top:157px;width:63.5px;height:19px;border:1px solid #dcdcdc;border-bottom:none;border-radius:3px 3px 0 0;background:#fff"></div>
<div style="left:69px;top:157px;width:57.5px;height:18px;border:1px solid #dcdcdc;border-bottom:none;border-radius:3px 3px 0 0;background:#f6f6f6"></div>
<span class="a" style="left:11.4px;top:160.3px;font-weight:bold;color:#333;font-size:9.7px">Allgemein</span>
<span class="a" style="left:78px;top:160.3px;color:#7a7a7a;font-size:9.8px">Finanzen</span>
<span class="a" style="left:12px;top:196.3px;">Anrede, Briefanrede:</span>
<span class="a" style="left:12px;top:219.3px;">Vorname, Nachname:</span>
<span class="a" style="left:12px;top:243.3px;">Adresse:</span>
<span class="a" style="left:12px;top:290.3px;">PLZ, Ort, Land:</span>
<span class="a" style="left:12px;top:318.3px;">Geschlecht, Zivilstand:</span>
<span class="a" style="left:12px;top:341.3px;">Eintritt, Austritt, Status:</span>
<span class="a" style="left:12px;top:365.3px;">Benutzer-Id, Rolle:</span>
<div class="fld" style="left:118px;top:194px;width:82px;height:18px;"></div><span class="f" style="left:121.4px;top:197.2px;">Frau</span><div class="trg" style="left:185px;top:194px;width:15px;height:18px;"></div><svg style="position:absolute;left:188.6px;top:200px;" width="7.4" height="5.6" viewBox="0 0 8 6" ><path d="M1,1.2 L4,4.4 L7,1.2" fill="none" stroke="#2b5aa8" stroke-width="1.8" stroke-linecap="round" stroke-linejoin="round"/></svg>
<div class="fld" style="left:204px;top:194px;width:154px;height:18px;"></div><div class="trg" style="left:343px;top:194px;width:15px;height:18px;"></div><svg style="position:absolute;left:346.6px;top:200px;" width="7.4" height="5.6" viewBox="0 0 8 6" ><path d="M1,1.2 L4,4.4 L7,1.2" fill="none" stroke="#2b5aa8" stroke-width="1.8" stroke-linecap="round" stroke-linejoin="round"/></svg>
<div class="fld" style="left:118px;top:217px;width:118px;height:18px;"></div><span class="f" style="left:121.4px;top:220.2px;">Anna</span>
<div class="fld" style="left:240px;top:217px;width:117px;height:18px;"></div><span class="f" style="left:243.4px;top:220.2px;">Müller</span>
<div class="fld" style="left:118px;top:241px;width:239px;height:18px;"></div><span class="f" style="left:121.4px;top:244.2px;">Musterweg 10</span>
<div class="fld" style="left:118px;top:264px;width:239px;height:18px;"></div>
<div class="fld" style="left:118px;top:288px;width:66px;height:18px;"></div><span class="f" style="left:121.4px;top:291.2px;">88000</span>
<div class="fld" style="left:187px;top:288px;width:84px;height:18px;"></div><span class="f" style="left:190.4px;top:291.2px;">Musterstadt</span>
<div class="fld" style="left:275px;top:288px;width:82px;height:18px;"></div><span class="f" style="left:278.4px;top:291.2px;">Deutschland</span><div class="trg" style="left:342px;top:288px;width:15px;height:18px;"></div><svg style="position:absolute;left:345.6px;top:294px;" width="7.4" height="5.6" viewBox="0 0 8 6" ><path d="M1,1.2 L4,4.4 L7,1.2" fill="none" stroke="#2b5aa8" stroke-width="1.8" stroke-linecap="round" stroke-linejoin="round"/></svg>
<div class="fld" style="left:118px;top:316px;width:116px;height:18px;"></div><span class="f" style="left:121.4px;top:319.2px;">weiblich</span><div class="trg" style="left:219px;top:316px;width:15px;height:18px;"></div><svg style="position:absolute;left:222.6px;top:322px;" width="7.4" height="5.6" viewBox="0 0 8 6" ><path d="M1,1.2 L4,4.4 L7,1.2" fill="none" stroke="#2b5aa8" stroke-width="1.8" stroke-linecap="round" stroke-linejoin="round"/></svg>
<div class="fld" style="left:240px;top:316px;width:117px;height:18px;"></div><div class="trg" style="left:342px;top:316px;width:15px;height:18px;"></div><svg style="position:absolute;left:345.6px;top:322px;" width="7.4" height="5.6" viewBox="0 0 8 6" ><path d="M1,1.2 L4,4.4 L7,1.2" fill="none" stroke="#2b5aa8" stroke-width="1.8" stroke-linecap="round" stroke-linejoin="round"/></svg>
<div class="fld" style="left:118px;top:339px;width:58px;height:18px;"></div><span class="f" style="left:121.4px;top:342.2px;">02.03.20</span><div class="trg" style="left:161px;top:339px;width:15px;height:18px;"></div><svg style="position:absolute;left:163.2px;top:343.2px;" width="10.2" height="9.4" viewBox="0 0 10.5 9.5" ><rect x="0.5" y="0.5" width="9.5" height="8.5" rx="0.8" fill="#f4f6fa" stroke="#5a78a8" stroke-width="0.9"/><rect x="0.5" y="0.5" width="9.5" height="2" fill="#6a88b8"/><circle cx="8" cy="3.6" r="1.5" fill="#e04040"/></svg>
<div class="fld" style="left:180px;top:339px;width:58px;height:18px;"></div><div class="trg" style="left:223px;top:339px;width:15px;height:18px;"></div><svg style="position:absolute;left:225.2px;top:343.2px;" width="10.2" height="9.4" viewBox="0 0 10.5 9.5" ><rect x="0.5" y="0.5" width="9.5" height="8.5" rx="0.8" fill="#f4f6fa" stroke="#5a78a8" stroke-width="0.9"/><rect x="0.5" y="0.5" width="9.5" height="2" fill="#6a88b8"/><circle cx="8" cy="3.6" r="1.5" fill="#e04040"/></svg>
<div class="fld" style="left:242px;top:339px;width:115px;height:18px;"></div><span class="f" style="left:245.4px;top:342.2px;">Aktivmitglied</span><div class="trg" style="left:342px;top:339px;width:15px;height:18px;"></div><svg style="position:absolute;left:345.6px;top:345px;" width="7.4" height="5.6" viewBox="0 0 8 6" ><path d="M1,1.2 L4,4.4 L7,1.2" fill="none" stroke="#2b5aa8" stroke-width="1.8" stroke-linecap="round" stroke-linejoin="round"/></svg>
<div class="fld" style="left:118px;top:363px;width:118px;height:18px;"></div><span class="f" style="left:121.4px;top:366.2px;">anna.mueller</span>
<div class="fld" style="left:240px;top:363px;width:117px;height:18px;"></div><span class="f" style="left:243.4px;top:366.2px;">Standard Benutzer</span><div class="trg" style="left:342px;top:363px;width:15px;height:18px;"></div><svg style="position:absolute;left:345.6px;top:369px;" width="7.4" height="5.6" viewBox="0 0 8 6" ><path d="M1,1.2 L4,4.4 L7,1.2" fill="none" stroke="#2b5aa8" stroke-width="1.8" stroke-linecap="round" stroke-linejoin="round"/></svg>
<span class="a" style="left:374px;top:196.3px;">Telefon Privat:</span>
<span class="a" style="left:374px;top:219.3px;">Telefon Mobil:</span>
<span class="a" style="left:374px;top:243.3px;">Telefon Geschäft:</span>
<span class="a" style="left:374px;top:266.3px;">Fax:</span>
<span class="a" style="left:374px;top:290.3px;">E-Mail:</span>
<span class="a" style="left:374px;top:320.3px;">Geburtsdatum</span>
<span class="a" style="left:374px;top:344.3px;">Gruppen:</span>
<div class="fld" style="left:455px;top:194px;width:106px;height:18px;"></div><span class="f" style="left:458.4px;top:197.2px;">0612875621735</span>
<div class="fld" style="left:455px;top:217px;width:106px;height:18px;"></div>
<div class="fld" style="left:455px;top:241px;width:106px;height:18px;"></div>
<div class="fld" style="left:455px;top:264px;width:106px;height:18px;"></div>
<div class="fld" style="left:455px;top:288px;width:106px;height:18px;"></div><span class="f" style="left:458.4px;top:291.2px;">peter.mueller@test.de</span>
<div class="fld" style="left:455px;top:318px;width:117px;height:18px;"></div><span class="f" style="left:458.4px;top:321.2px;">16.03.2008</span><div class="trg" style="left:557px;top:318px;width:15px;height:18px;"></div><svg style="position:absolute;left:559.2px;top:322.2px;" width="10.2" height="9.4" viewBox="0 0 10.5 9.5" ><rect x="0.5" y="0.5" width="9.5" height="8.5" rx="0.8" fill="#f4f6fa" stroke="#5a78a8" stroke-width="0.9"/><rect x="0.5" y="0.5" width="9.5" height="2" fill="#6a88b8"/><circle cx="8" cy="3.6" r="1.5" fill="#e04040"/></svg>
<div class="fld" style="left:455px;top:342px;width:180px;height:34px;"></div>
<div style="left:457px;top:345px;width:152.5px;height:12.5px;background:#dfe8f6;border:1px solid #a9cdb0;border-radius:3px"></div>
<span class="f" style="left:458.6px;top:344.9px;font-family:'DejaVu Sans','Liberation Sans',sans-serif;font-size:9.6px;letter-spacing:-0.2px">LR04 Jahrgang ab 06 (Spieler)</span>
<svg style="position:absolute;left:601px;top:348.6px;" width="5.6" height="5.6" viewBox="0 0 6 6" ><path d='M0.8,0.8 L5.2,5.2 M5.2,0.8 L0.8,5.2' stroke='#8a8a8a' stroke-width='1.3'/></svg>
<div style="left:618.5px;top:345px;width:12px;height:12.5px;background:linear-gradient(#f4f8fd,#d6e3f5);border:1px solid #a9c3e6;border-radius:2px"></div>
<svg style="position:absolute;left:621.5px;top:348.2px;" width="6" height="6" viewBox="0 0 6 6" ><path d='M3,0.4 L3,5.6 M0.4,3 L5.6,3' stroke='#4a7fd0' stroke-width='1.3'/></svg>
<svg style="position:absolute;left:565.5px;top:194px;" width="65" height="97" viewBox="0 0 65 97" ><defs><filter id="b1" x="-30%" y="-30%" width="160%" height="160%"><feGaussianBlur stdDeviation="1.2"/></filter><filter id="b2" x="-30%" y="-30%" width="160%" height="160%"><feGaussianBlur stdDeviation="0.55"/></filter><filter id="b3" x="-30%" y="-30%" width="160%" height="160%"><feGaussianBlur stdDeviation="3"/></filter><radialGradient id="sk" cx="0.40" cy="0.40" r="0.65"><stop offset="0" stop-color="#f5ddd0"/><stop offset="0.55" stop-color="#e8c2b0"/><stop offset="1" stop-color="#c18d78"/></radialGradient><linearGradient id="bgp" x1="0" y1="0" x2="1" y2="1"><stop offset="0" stop-color="#bfcce2"/><stop offset="1" stop-color="#dde2ec"/></linearGradient></defs><rect width="65" height="97" fill="url(#bgp)"/><g filter="url(#b1)"><path d="M5,40 C2,12 12,-5 35,-5 C57,-5 66,12 62,40 Z" fill="#352b33"/><path d="M13,14 C2,28 -2,52 4,66 C7,73 13,72 15,66 L14,30 Z" fill="#2e2832"/><path d="M16,66 C17,74 12,84 6,98 L-1,98 C1,88 4,76 7,64 Z" fill="#553b30"/><path d="M9,70 C9,76 6,84 3,92" stroke="#3c2a24" stroke-width="1.6" fill="none"/><path d="M54,14 C65,25 65,42 60,52 L53,40 Z" fill="#30262c"/><rect x="22" y="68" width="28" height="20" fill="#c3917a"/><path d="M6,99 C8,88 18,83 25,81 C30,91 43,91 49,81 C57,82 65,85 68,90 L68,99 Z" fill="#d9d3c8"/><ellipse cx="34.5" cy="46" rx="25" ry="33.5" fill="url(#sk)"/><ellipse cx="61.5" cy="45" rx="2.6" ry="7" fill="#d9a994"/><path d="M9,34 C9,16 24,8 37,9 C52,10 60,21 61,34 C56,23 47,16.5 37,16.5 C33,16.5 30.5,15.5 28.5,13 C22,16 13,24 9,34 Z" fill="#352b33"/></g><g filter="url(#b3)" opacity="0.55"><ellipse cx="52" cy="60" rx="7" ry="16" fill="#b9846e"/><ellipse cx="35" cy="77" rx="12" ry="3.5" fill="#b07a64"/><ellipse cx="40" cy="8" rx="16" ry="5" fill="#5a5562"/></g><g filter="url(#b2)"><ellipse cx="19.6" cy="42.6" rx="4.2" ry="2" fill="#efe4e0"/><ellipse cx="44" cy="42.6" rx="4.2" ry="2" fill="#efe4e0"/><circle cx="19.8" cy="42.5" r="2.2" fill="#2c1d1a"/><circle cx="43.8" cy="42.5" r="2.2" fill="#2c1d1a"/><path d="M15,42 C17,39.6 22,39.6 24.6,42" stroke="#3a2a28" stroke-width="1" fill="none"/><path d="M39.4,42 C42,39.6 47,39.6 49,42" stroke="#3a2a28" stroke-width="1" fill="none"/><path d="M13.5,37 C17,34.6 22.5,34.8 26,36.8" stroke="#6a4c40" stroke-width="1.4" fill="none"/><path d="M38,36.8 C41.5,34.8 47,34.6 50.5,37" stroke="#6a4c40" stroke-width="1.4" fill="none"/><path d="M27,54.5 C28.5,57 30.5,56 31.6,56.8 C32.7,56 34.7,57 36.2,54.5" stroke="#b07c68" stroke-width="1.2" fill="none"/><path d="M23.6,66 C27,64 30.4,65.2 31.8,65.4 C33.2,65.2 36.6,64 40,66 C36.5,71.6 27,71.6 23.6,66 Z" fill="#cc737e"/><path d="M25,66.4 C30,67.4 34,67.4 38.6,66.4" stroke="#e8c8c4" stroke-width="0.8" fill="none"/></g></svg>
</div>
</body></html>
